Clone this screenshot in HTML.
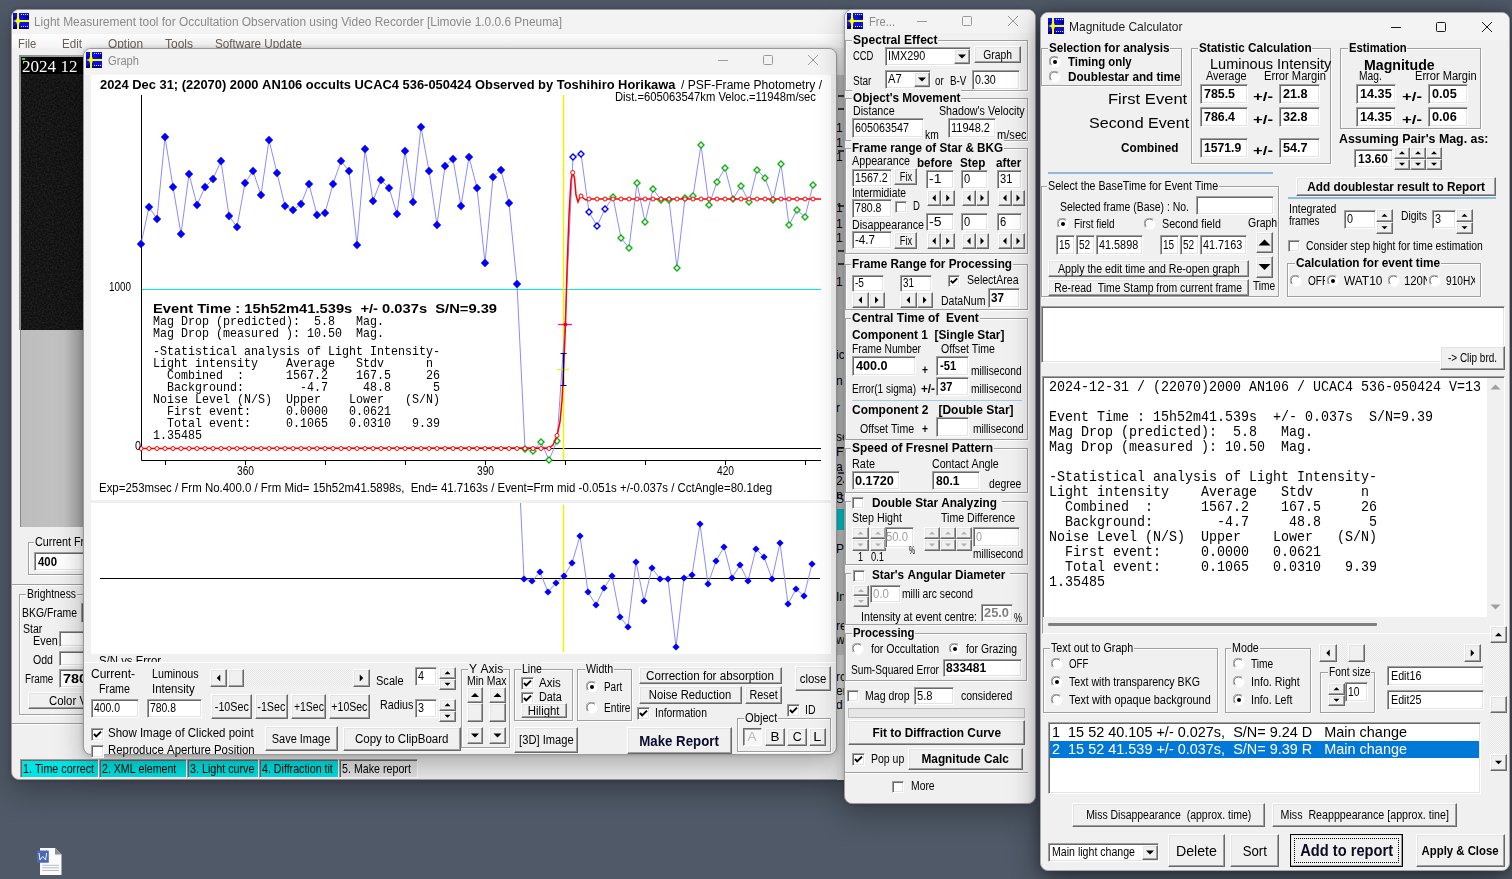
<!DOCTYPE html><html><head><meta charset="utf-8"><style>
*{margin:0;padding:0;box-sizing:border-box}
html,body{width:1512px;height:879px;overflow:hidden}
body{position:relative;font-family:"Liberation Sans",sans-serif;font-size:12px;
 background:#4f5967;}
.a{position:absolute}
.t{position:absolute;white-space:nowrap}
.win{position:absolute;background:#f0f0f0;border:1px solid #9a9a9a;border-radius:8px;overflow:hidden;box-shadow:0 12px 28px rgba(0,0,0,0.28), 0 0 4px rgba(0,0,0,0.2)}
.ed{position:absolute;white-space:nowrap;overflow:hidden;border-top:1px solid #a0a0a0;border-left:1px solid #a0a0a0;border-bottom:1px solid #fff;border-right:1px solid #fff;box-shadow:inset 1px 1px 0 #696969, inset -1px -1px 0 #e3e3e3}
.bt{position:absolute;white-space:nowrap;overflow:hidden;display:flex;justify-content:center;align-items:center;background:#f0f0f0;border-top:1px solid #fff;border-left:1px solid #fff;border-bottom:1px solid #696969;border-right:1px solid #696969;box-shadow:inset -1px -1px 0 #a0a0a0, inset 1px 1px 0 #e3e3e3}
.gb{position:absolute;border:1px solid #a0a0a0;box-shadow:inset 1px 1px 0 #fff, 1px 1px 0 #fff}
.gl{background:#f0f0f0;padding:0 1px}
.ck{position:absolute;background:#fff;border-top:1px solid #a0a0a0;border-left:1px solid #a0a0a0;border-bottom:1px solid #fff;border-right:1px solid #fff;box-shadow:inset 1px 1px 0 #696969, inset -1px -1px 0 #e3e3e3}
</style></head><body><svg class="a" style="left:30px;top:840px" width="40" height="39" viewBox="0 0 40 39"><path d="M10 8 H25 L31.5 14.5 V35 H10Z" fill="#fafafa"/><path d="M25 8 L31.5 14.5 H25Z" fill="#8a8c90"/><rect x="7" y="10.6" width="11.8" height="12.2" rx="0.5" fill="#4a68b4"/><path d="M9 13 L10 20 L12.8 16.5 L15.6 20 L16.6 13" stroke="#f4f6ff" stroke-width="1" fill="none"/><path d="M12.3 25.3 H29 M12.3 27.8 H29 M12.3 30.5 H29" stroke="#b8bcc8" stroke-width="1"/></svg><div class="win" style="left:11px;top:9px;width:845px;height:771px"></div><div class="a" style="left:12px;top:10px;width:843px;height:24px;background:#f3f3f3;border-radius:7px 7px 0 0"></div><div class="a" style="left:12px;top:34px;width:843px;height:14px;background:linear-gradient(#fefefe,#f5f5f5)"></div><svg class="a" style="left:13px;top:13px" width="16" height="16" viewBox="0 0 16 16"><rect x="0" y="0" width="16" height="16" fill="#0a10e8"/><path d="M0 14 L4 12 L8 15 L12 13 L16 16 H0Z M9 2 L13 4 L16 2 V6 L12 5Z M1 3 L3 5 L0 7Z" fill="#00007a"/><rect x="3" y="7" width="13" height="2" fill="#ffff00"/><rect x="4" y="0" width="2" height="16" fill="#ffff00"/><path d="M5 2 L6.8 7 L10 8 L6.8 9 L5 14 L3.2 9 L0 8 L3.2 7Z" fill="#ffff00"/><rect x="8" y="1" width="1" height="1" fill="#e0e8ff"/><rect x="10" y="1" width="1" height="1" fill="#e0e8ff"/><rect x="12" y="1" width="1" height="1" fill="#e0e8ff"/><rect x="14" y="1" width="1" height="1" fill="#e0e8ff"/><rect x="8" y="13" width="1" height="1" fill="#e0e8ff"/><rect x="10" y="13" width="1" height="1" fill="#e0e8ff"/><rect x="12" y="13" width="1" height="1" fill="#e0e8ff"/><rect x="14" y="13" width="1" height="1" fill="#e0e8ff"/></svg><div class="t" style="left:34px;top:13.5px;line-height:16px;"><span style="display:inline-block;flex-shrink:0;font-size:12.5px;color:#8a8a8a;font-family:'Liberation Sans', sans-serif;transform:scaleX(0.9527);transform-origin:0 50%">Light&nbsp;Measurement&nbsp;tool&nbsp;for&nbsp;Occultation&nbsp;Observation&nbsp;using&nbsp;Video&nbsp;Recorder&nbsp;[Limovie&nbsp;1.0.0.6&nbsp;Pneuma]</span></div><div class="t" style="left:18px;top:35.5px;line-height:16px;"><span style="display:inline-block;flex-shrink:0;font-size:12.5px;color:#6a5d55;font-family:'Liberation Sans', sans-serif;transform:scaleX(0.9036);transform-origin:0 50%">File</span></div><div class="t" style="left:62.4px;top:35.5px;line-height:16px;"><span style="display:inline-block;flex-shrink:0;font-size:12.5px;color:#6a5d55;font-family:'Liberation Sans', sans-serif;transform:scaleX(0.9285);transform-origin:0 50%">Edit</span></div><div class="t" style="left:108.4px;top:35.5px;line-height:16px;"><span style="display:inline-block;flex-shrink:0;font-size:12.5px;color:#6a5d55;font-family:'Liberation Sans', sans-serif;transform:scaleX(0.9503);transform-origin:0 50%">Option</span></div><div class="t" style="left:164.8px;top:35.5px;line-height:16px;"><span style="display:inline-block;flex-shrink:0;font-size:12.5px;color:#6a5d55;font-family:'Liberation Sans', sans-serif;transform:scaleX(0.9595);transform-origin:0 50%">Tools</span></div><div class="t" style="left:214.8px;top:35.5px;line-height:16px;"><span style="display:inline-block;flex-shrink:0;font-size:12.5px;color:#6a5d55;font-family:'Liberation Sans', sans-serif;transform:scaleX(0.9344);transform-origin:0 50%">Software&nbsp;Update</span></div><div class="a" style="left:19px;top:55px;width:64px;height:275px;background:linear-gradient(90deg,#8a8a8a,#b0b0b0)"></div><div class="a" style="left:21px;top:57px;width:62px;height:273px;background:#0e0e0e"></div><svg class="a" style="left:21px;top:74px" width="62" height="256"><filter id="nz"><feTurbulence type="fractalNoise" baseFrequency="0.6" numOctaves="2" seed="3"/><feColorMatrix values="0 0 0 0 0.12  0 0 0 0 0.12  0 0 0 0 0.12  0 0 0 0.5 -0.15"/></filter><rect width="62" height="256" filter="url(#nz)"/></svg><div class="a" style="left:21px;top:57px;width:62px;height:17px;background:#000"></div><div class="a" style="left:22px;top:58px;width:3px;height:2px;background:#20e020"></div><div class="t" style="left:21.5px;top:58.5px;line-height:16px;"><span style="display:inline-block;flex-shrink:0;font-size:16px;color:#fff;font-family:'Liberation Serif', serif;transform:scaleX(1.0673);transform-origin:0 50%">2024&nbsp;12</span></div><div class="a" style="left:20px;top:330px;width:63px;height:197px;background:linear-gradient(90deg,#bdbdbd 0%,#c2c2c2 70%,#a4a4a4 100%);border-left:1px solid #888"></div><div class="gb" style="left:28px;top:542px;width:66px;height:33px"></div><div class="t gl" style="left:34px;top:534px;line-height:16px;width:51.2px;overflow:hidden"><span style="display:inline-block;flex-shrink:0;font-size:12px;color:#000;font-family:'Liberation Sans', sans-serif;transform:scaleX(0.9000);transform-origin:0 50%">Current&nbsp;Fr</span></div><div class="ed" style="left:34px;top:552px;width:61px;height:19px;background:#fff;line-height:17px;padding-left:3px"><span style="display:inline-block;flex-shrink:0;font-size:13px;font-weight:bold;color:#000;font-family:'Liberation Sans', sans-serif;transform:scaleX(0.8760);transform-origin:0 50%">400</span></div><div class="a" style="left:12px;top:584px;width:71px;height:1px;background:#a0a0a0"></div><div class="a" style="left:12px;top:585px;width:71px;height:1px;background:#fff"></div><div class="gb" style="left:19px;top:594px;width:75px;height:121px"></div><div class="t gl" style="left:26px;top:586px;line-height:16px;width:51.0px;overflow:hidden"><span style="display:inline-block;flex-shrink:0;font-size:12px;color:#000;font-family:'Liberation Sans', sans-serif;transform:scaleX(0.8643);transform-origin:0 50%">Brightness</span></div><div class="t" style="left:21.7px;top:605.0px;line-height:16px;"><span style="display:inline-block;flex-shrink:0;font-size:12px;color:#000;font-family:'Liberation Sans', sans-serif;transform:scaleX(0.8682);transform-origin:0 50%">BKG/Frame</span></div><div class="ed" style="left:81px;top:603px;width:14px;height:20px;background:#fff;line-height:18px;padding-left:3px"></div><div class="t" style="left:23px;top:621.0px;line-height:16px;"><span style="display:inline-block;flex-shrink:0;font-size:12px;color:#000;font-family:'Liberation Sans', sans-serif;transform:scaleX(0.8770);transform-origin:0 50%">Star</span></div><div class="t" style="left:33px;top:633.0px;line-height:16px;"><span style="display:inline-block;flex-shrink:0;font-size:12px;color:#000;font-family:'Liberation Sans', sans-serif;transform:scaleX(0.9031);transform-origin:0 50%">Even</span></div><div class="ed" style="left:59px;top:631px;width:36px;height:16px;background:#fff;line-height:14px;padding-left:3px"></div><div class="t" style="left:33px;top:652.0px;line-height:16px;"><span style="display:inline-block;flex-shrink:0;font-size:12px;color:#000;font-family:'Liberation Sans', sans-serif;transform:scaleX(0.8818);transform-origin:0 50%">Odd</span></div><div class="ed" style="left:59px;top:651px;width:36px;height:15px;background:#fff;line-height:13px;padding-left:3px"></div><div class="t" style="left:25.4px;top:670.5px;line-height:16px;"><span style="display:inline-block;flex-shrink:0;font-size:12px;color:#000;font-family:'Liberation Sans', sans-serif;transform:scaleX(0.8163);transform-origin:0 50%">Frame</span></div><div class="ed" style="left:59px;top:669px;width:36px;height:19px;background:#fff;line-height:17px;padding-left:3px"><span style="display:inline-block;flex-shrink:0;font-size:13px;font-weight:bold;color:#000;font-family:'Liberation Sans', sans-serif;transform:scaleX(1.1065);transform-origin:0 50%">780</span></div><div class="bt" style="left:28px;top:692px;width:82px;height:17px;line-height:16px;padding-top:0px;"></div><div class="t" style="left:48.5px;top:692.5px;line-height:16px;"><span style="display:inline-block;flex-shrink:0;font-size:12px;color:#000;font-family:'Liberation Sans', sans-serif;transform:scaleX(0.9497);transform-origin:0 50%">Color&nbsp;V</span></div><div class="a" style="left:12px;top:723px;width:831px;height:1px;background:#a0a0a0"></div><div class="a" style="left:12px;top:724px;width:831px;height:1px;background:#fff"></div><div class="a" style="left:20px;top:759px;width:79px;height:19px;background:#00e4e4;border:1px solid #a0a0a0;border-right-color:#fff;border-bottom-color:#fff;box-shadow:inset 1px 1px 0 #696969"></div><div class="t" style="left:23px;top:760.5px;line-height:16px;"><span style="display:inline-block;flex-shrink:0;font-size:13px;color:#000;font-family:'Liberation Sans', sans-serif;transform:scaleX(0.8236);transform-origin:0 50%">1.&nbsp;Time&nbsp;correct</span></div><div class="a" style="left:99px;top:759px;width:88px;height:19px;background:#00e4e4;border:1px solid #a0a0a0;border-right-color:#fff;border-bottom-color:#fff;box-shadow:inset 1px 1px 0 #696969"></div><div class="t" style="left:102px;top:760.5px;line-height:16px;"><span style="display:inline-block;flex-shrink:0;font-size:13px;color:#000;font-family:'Liberation Sans', sans-serif;transform:scaleX(0.8160);transform-origin:0 50%">2.&nbsp;XML&nbsp;element</span></div><div class="a" style="left:187px;top:759px;width:72px;height:19px;background:#00e4e4;border:1px solid #a0a0a0;border-right-color:#fff;border-bottom-color:#fff;box-shadow:inset 1px 1px 0 #696969"></div><div class="t" style="left:190px;top:760.5px;line-height:16px;"><span style="display:inline-block;flex-shrink:0;font-size:13px;color:#000;font-family:'Liberation Sans', sans-serif;transform:scaleX(0.8252);transform-origin:0 50%">3.&nbsp;Light&nbsp;curve</span></div><div class="a" style="left:259px;top:759px;width:80px;height:19px;background:#00e4e4;border:1px solid #a0a0a0;border-right-color:#fff;border-bottom-color:#fff;box-shadow:inset 1px 1px 0 #696969"></div><div class="t" style="left:262px;top:760.5px;line-height:16px;"><span style="display:inline-block;flex-shrink:0;font-size:13px;color:#000;font-family:'Liberation Sans', sans-serif;transform:scaleX(0.8189);transform-origin:0 50%">4.&nbsp;Diffraction&nbsp;tit</span></div><div class="a" style="left:339px;top:759px;width:79px;height:19px;background:#e6e6e6;border:1px solid #a0a0a0;border-right-color:#fff;border-bottom-color:#fff;box-shadow:inset 1px 1px 0 #696969"></div><div class="t" style="left:342px;top:760.5px;line-height:16px;"><span style="display:inline-block;flex-shrink:0;font-size:13px;color:#000;font-family:'Liberation Sans', sans-serif;transform:scaleX(0.8220);transform-origin:0 50%">5.&nbsp;Make&nbsp;report</span></div><div class="a" style="left:837px;top:48px;width:7px;height:732px;background:#ececec"></div><div class="a" style="left:837px;top:75px;width:7px;height:425px;background:#c8c8c8"></div><div class="a" style="left:837px;top:503px;width:7px;height:152px;background:#d0d0d0"></div><div class="a" style="left:838px;top:95px;width:6px;height:1.5px;background:#404040"></div><div class="a" style="left:838px;top:108px;width:6px;height:1.5px;background:#404040"></div><div class="a" style="left:838px;top:150px;width:6px;height:1.5px;background:#404040"></div><div class="a" style="left:838px;top:205px;width:6px;height:1.5px;background:#404040"></div><div class="a" style="left:838px;top:250px;width:6px;height:1.5px;background:#404040"></div><div class="a" style="left:838px;top:263px;width:6px;height:1.5px;background:#404040"></div><div class="a" style="left:838px;top:447px;width:6px;height:1.5px;background:#404040"></div><div class="a" style="left:838px;top:472px;width:6px;height:1.5px;background:#404040"></div><div class="a" style="left:837px;top:120px;width:7px;height:16px;overflow:hidden;line-height:16px"><span style="font-size:12px;margin-left:-1px">1</span></div><div class="a" style="left:837px;top:135px;width:7px;height:16px;overflow:hidden;line-height:16px"><span style="font-size:12px;margin-left:-1px">1</span></div><div class="a" style="left:837px;top:149px;width:7px;height:16px;overflow:hidden;line-height:16px"><span style="font-size:12px;margin-left:-1px">1</span></div><div class="a" style="left:837px;top:200px;width:7px;height:16px;overflow:hidden;line-height:16px"><span style="font-size:12px;margin-left:-1px">1</span></div><div class="a" style="left:837px;top:216px;width:7px;height:16px;overflow:hidden;line-height:16px"><span style="font-size:12px;margin-left:-1px">1</span></div><div class="a" style="left:837px;top:230px;width:7px;height:16px;overflow:hidden;line-height:16px"><span style="font-size:12px;margin-left:-1px">1</span></div><div class="a" style="left:837px;top:274px;width:7px;height:16px;overflow:hidden;line-height:16px"><span style="font-size:12px;margin-left:-1px">1</span></div><div class="a" style="left:837px;top:347px;width:7px;height:16px;overflow:hidden;line-height:16px"><span style="font-size:12px;margin-left:-1px">ic</span></div><div class="a" style="left:837px;top:373px;width:7px;height:16px;overflow:hidden;line-height:16px"><span style="font-size:12px;margin-left:-1px">n</span></div><div class="a" style="left:837px;top:400px;width:7px;height:16px;overflow:hidden;line-height:16px"><span style="font-size:12px;margin-left:-1px">r</span></div><div class="a" style="left:837px;top:429px;width:7px;height:16px;overflow:hidden;line-height:16px"><span style="font-size:12px;margin-left:-1px">se</span></div><div class="a" style="left:837px;top:444px;width:7px;height:16px;overflow:hidden;line-height:16px"><span style="font-size:12px;margin-left:-1px">Fi</span></div><div class="a" style="left:837px;top:487px;width:7px;height:16px;overflow:hidden;line-height:16px"><span style="font-size:12px;margin-left:-1px">n</span></div><div class="a" style="left:837px;top:459px;width:7px;height:16px;overflow:hidden;line-height:16px"><span style="font-size:12px;margin-left:-1px">a</span></div><div class="a" style="left:837px;top:473px;width:7px;height:16px;overflow:hidden;line-height:16px"><span style="font-size:12px;margin-left:-1px">24</span></div><div class="a" style="left:837px;top:491px;width:7px;height:16px;overflow:hidden;line-height:16px"><span style="font-size:12px;margin-left:-1px">S</span></div><div class="a" style="left:837px;top:541px;width:7px;height:16px;overflow:hidden;line-height:16px"><span style="font-size:12px;margin-left:-1px">P</span></div><div class="a" style="left:837px;top:589px;width:7px;height:16px;overflow:hidden;line-height:16px"><span style="font-size:12px;margin-left:-1px">In</span></div><div class="a" style="left:837px;top:618px;width:7px;height:16px;overflow:hidden;line-height:16px"><span style="font-size:12px;margin-left:-1px">re</span></div><div class="a" style="left:837px;top:632px;width:7px;height:16px;overflow:hidden;line-height:16px"><span style="font-size:12px;margin-left:-1px">w</span></div><div class="a" style="left:837px;top:669px;width:7px;height:16px;overflow:hidden;line-height:16px"><span style="font-size:12px;margin-left:-1px">rc</span></div><div class="a" style="left:837px;top:683px;width:7px;height:16px;overflow:hidden;line-height:16px"><span style="font-size:12px;margin-left:-1px">er</span></div><div class="a" style="left:837px;top:697px;width:7px;height:16px;overflow:hidden;line-height:16px"><span style="font-size:12px;margin-left:-1px">d</span></div><div class="a" style="left:837px;top:509px;width:7px;height:21px;background:#00d0d8"></div><div class="win" style="left:83px;top:48px;width:754px;height:707px"></div><div class="a" style="left:84px;top:49px;width:752px;height:26px;background:#f3f3f3;border-radius:7px 7px 0 0"></div><svg class="a" style="left:86px;top:52px" width="16" height="16" viewBox="0 0 16 16"><rect x="0" y="0" width="16" height="16" fill="#0a10e8"/><path d="M0 14 L4 12 L8 15 L12 13 L16 16 H0Z M9 2 L13 4 L16 2 V6 L12 5Z M1 3 L3 5 L0 7Z" fill="#00007a"/><rect x="3" y="7" width="13" height="2" fill="#ffff00"/><rect x="4" y="0" width="2" height="16" fill="#ffff00"/><path d="M5 2 L6.8 7 L10 8 L6.8 9 L5 14 L3.2 9 L0 8 L3.2 7Z" fill="#ffff00"/><rect x="8" y="1" width="1" height="1" fill="#e0e8ff"/><rect x="10" y="1" width="1" height="1" fill="#e0e8ff"/><rect x="12" y="1" width="1" height="1" fill="#e0e8ff"/><rect x="14" y="1" width="1" height="1" fill="#e0e8ff"/><rect x="8" y="13" width="1" height="1" fill="#e0e8ff"/><rect x="10" y="13" width="1" height="1" fill="#e0e8ff"/><rect x="12" y="13" width="1" height="1" fill="#e0e8ff"/><rect x="14" y="13" width="1" height="1" fill="#e0e8ff"/></svg><div class="t" style="left:108px;top:52.5px;line-height:16px;"><span style="display:inline-block;flex-shrink:0;font-size:12.5px;color:#8a8a8a;font-family:'Liberation Sans', sans-serif;transform:scaleX(0.8923);transform-origin:0 50%">Graph</span></div><svg class="a" style="left:0;top:0" width="1512" height="879" viewBox="0 0 1512 879"><path d="M718 60.5 h10" stroke="#9a9a9a" stroke-width="1"/><rect x="763.5" y="55.5" width="9" height="9" rx="1" stroke="#9a9a9a" fill="none" stroke-width="1"/><path d="M808 55 l10 10 M818 55 l-10 10" stroke="#9a9a9a" stroke-width="1"/></svg><div class="a" style="left:91px;top:75px;width:740px;height:425px;background:#fff"></div><div class="a" style="left:91px;top:503px;width:740px;height:151px;background:#fff"></div><svg class="a" style="left:0;top:0" width="1512" height="879" viewBox="0 0 1512 879"><path d="M141.5 95 V460.5 H821" stroke="#000" stroke-width="1" fill="none"/><path d="M165.5 460 V465" stroke="#000" stroke-width="1"/><path d="M245.5 460 V465" stroke="#000" stroke-width="1"/><path d="M325.5 460 V465" stroke="#000" stroke-width="1"/><path d="M405.5 460 V465" stroke="#000" stroke-width="1"/><path d="M485.5 460 V465" stroke="#000" stroke-width="1"/><path d="M565.5 460 V465" stroke="#000" stroke-width="1"/><path d="M645.5 460 V465" stroke="#000" stroke-width="1"/><path d="M725.5 460 V465" stroke="#000" stroke-width="1"/><path d="M805.5 460 V465" stroke="#000" stroke-width="1"/><path d="M142 289.5 H821" stroke="#00e8f0" stroke-width="1.2"/><path d="M142 448.5 H821" stroke="#000" stroke-width="1"/><path d="M563.5 95 V460" stroke="#f0f000" stroke-width="1.5"/><path d="M563.5 505 V652" stroke="#f0f000" stroke-width="1.5"/><path d="M141 244 L149 207 L157 219 L165 137 L173 187 L181 234 L189 174 L197 205 L205 187 L213 179 L221 161 L229 216 L237 227 L245 183 L253 171 L261 195 L269 140 L277 173 L285 206 L293 210 L301 204 L309 184 L317 215 L325 213 L333 184 L341 161 L349 171 L357 245 L365 149 L373 201 L381 180 L389 188 L397 214 L405 151 L413 202 L421 127 L429 171 L437 225 L445 166 L453 159 L461 206 L469 157 L477 188 L485 263 L493 177 L501 170 L509 203 L517 284 L525 449 L533 451 L541 442 L549 460 L557 441 L565 324 L573 157 L581 154 L589 212 L597 226 L605 209 L613 197 L621 238 L629 248 L637 183 L645 222 L653 189 L661 200 L669 200 L677 268 L685 198 L693 196 L701 145 L709 205 L717 182 L725 168 L733 199 L741 186 L749 202 L757 170 L765 178 L773 200 L781 164 L789 225 L797 210 L805 217 L813 185" stroke="#8c8cff" stroke-width="1" fill="none"/><path d="M141 239.8L145.2 244L141 248.2L136.8 244Z" fill="#0000ff"/><path d="M149 202.8L153.2 207L149 211.2L144.8 207Z" fill="#0000ff"/><path d="M157 214.8L161.2 219L157 223.2L152.8 219Z" fill="#0000ff"/><path d="M165 132.8L169.2 137L165 141.2L160.8 137Z" fill="#0000ff"/><path d="M173 182.8L177.2 187L173 191.2L168.8 187Z" fill="#0000ff"/><path d="M181 229.8L185.2 234L181 238.2L176.8 234Z" fill="#0000ff"/><path d="M189 169.8L193.2 174L189 178.2L184.8 174Z" fill="#0000ff"/><path d="M197 200.8L201.2 205L197 209.2L192.8 205Z" fill="#0000ff"/><path d="M205 182.8L209.2 187L205 191.2L200.8 187Z" fill="#0000ff"/><path d="M213 174.8L217.2 179L213 183.2L208.8 179Z" fill="#0000ff"/><path d="M221 156.8L225.2 161L221 165.2L216.8 161Z" fill="#0000ff"/><path d="M229 211.8L233.2 216L229 220.2L224.8 216Z" fill="#0000ff"/><path d="M237 222.8L241.2 227L237 231.2L232.8 227Z" fill="#0000ff"/><path d="M245 178.8L249.2 183L245 187.2L240.8 183Z" fill="#0000ff"/><path d="M253 166.8L257.2 171L253 175.2L248.8 171Z" fill="#0000ff"/><path d="M261 190.8L265.2 195L261 199.2L256.8 195Z" fill="#0000ff"/><path d="M269 135.8L273.2 140L269 144.2L264.8 140Z" fill="#0000ff"/><path d="M277 168.8L281.2 173L277 177.2L272.8 173Z" fill="#0000ff"/><path d="M285 201.8L289.2 206L285 210.2L280.8 206Z" fill="#0000ff"/><path d="M293 205.8L297.2 210L293 214.2L288.8 210Z" fill="#0000ff"/><path d="M301 199.8L305.2 204L301 208.2L296.8 204Z" fill="#0000ff"/><path d="M309 179.8L313.2 184L309 188.2L304.8 184Z" fill="#0000ff"/><path d="M317 210.8L321.2 215L317 219.2L312.8 215Z" fill="#0000ff"/><path d="M325 208.8L329.2 213L325 217.2L320.8 213Z" fill="#0000ff"/><path d="M333 179.8L337.2 184L333 188.2L328.8 184Z" fill="#0000ff"/><path d="M341 156.8L345.2 161L341 165.2L336.8 161Z" fill="#0000ff"/><path d="M349 166.8L353.2 171L349 175.2L344.8 171Z" fill="#0000ff"/><path d="M357 240.8L361.2 245L357 249.2L352.8 245Z" fill="#0000ff"/><path d="M365 144.8L369.2 149L365 153.2L360.8 149Z" fill="#0000ff"/><path d="M373 196.8L377.2 201L373 205.2L368.8 201Z" fill="#0000ff"/><path d="M381 175.8L385.2 180L381 184.2L376.8 180Z" fill="#0000ff"/><path d="M389 183.8L393.2 188L389 192.2L384.8 188Z" fill="#0000ff"/><path d="M397 209.8L401.2 214L397 218.2L392.8 214Z" fill="#0000ff"/><path d="M405 146.8L409.2 151L405 155.2L400.8 151Z" fill="#0000ff"/><path d="M413 197.8L417.2 202L413 206.2L408.8 202Z" fill="#0000ff"/><path d="M421 122.8L425.2 127L421 131.2L416.8 127Z" fill="#0000ff"/><path d="M429 166.8L433.2 171L429 175.2L424.8 171Z" fill="#0000ff"/><path d="M437 220.8L441.2 225L437 229.2L432.8 225Z" fill="#0000ff"/><path d="M445 161.8L449.2 166L445 170.2L440.8 166Z" fill="#0000ff"/><path d="M453 154.8L457.2 159L453 163.2L448.8 159Z" fill="#0000ff"/><path d="M461 201.8L465.2 206L461 210.2L456.8 206Z" fill="#0000ff"/><path d="M469 152.8L473.2 157L469 161.2L464.8 157Z" fill="#0000ff"/><path d="M477 183.8L481.2 188L477 192.2L472.8 188Z" fill="#0000ff"/><path d="M485 258.8L489.2 263L485 267.2L480.8 263Z" fill="#0000ff"/><path d="M493 172.8L497.2 177L493 181.2L488.8 177Z" fill="#0000ff"/><path d="M501 165.8L505.2 170L501 174.2L496.8 170Z" fill="#0000ff"/><path d="M509 198.8L513.2 203L509 207.2L504.8 203Z" fill="#0000ff"/><path d="M517 279.8L521.2 284L517 288.2L512.8 284Z" fill="#0000ff"/><path d="M525 446.0L528.0 449L525 452.0L522.0 449Z" fill="#fff" stroke="#10b010" stroke-width="1.4"/><path d="M533 448.0L536.0 451L533 454.0L530.0 451Z" fill="#fff" stroke="#10b010" stroke-width="1.4"/><path d="M541 439.0L544.0 442L541 445.0L538.0 442Z" fill="#fff" stroke="#10b010" stroke-width="1.4"/><path d="M549 457.0L552.0 460L549 463.0L546.0 460Z" fill="#fff" stroke="#10b010" stroke-width="1.4"/><path d="M557 438.0L560.0 441L557 444.0L554.0 441Z" fill="#fff" stroke="#10b010" stroke-width="1.4"/><path d="M613 194.0L616.0 197L613 200.0L610.0 197Z" fill="#fff" stroke="#10b010" stroke-width="1.4"/><path d="M621 235.0L624.0 238L621 241.0L618.0 238Z" fill="#fff" stroke="#10b010" stroke-width="1.4"/><path d="M629 245.0L632.0 248L629 251.0L626.0 248Z" fill="#fff" stroke="#10b010" stroke-width="1.4"/><path d="M637 180.0L640.0 183L637 186.0L634.0 183Z" fill="#fff" stroke="#10b010" stroke-width="1.4"/><path d="M645 219.0L648.0 222L645 225.0L642.0 222Z" fill="#fff" stroke="#10b010" stroke-width="1.4"/><path d="M653 186.0L656.0 189L653 192.0L650.0 189Z" fill="#fff" stroke="#10b010" stroke-width="1.4"/><path d="M661 197.0L664.0 200L661 203.0L658.0 200Z" fill="#fff" stroke="#10b010" stroke-width="1.4"/><path d="M669 197.0L672.0 200L669 203.0L666.0 200Z" fill="#fff" stroke="#10b010" stroke-width="1.4"/><path d="M677 265.0L680.0 268L677 271.0L674.0 268Z" fill="#fff" stroke="#10b010" stroke-width="1.4"/><path d="M685 195.0L688.0 198L685 201.0L682.0 198Z" fill="#fff" stroke="#10b010" stroke-width="1.4"/><path d="M693 193.0L696.0 196L693 199.0L690.0 196Z" fill="#fff" stroke="#10b010" stroke-width="1.4"/><path d="M701 142.0L704.0 145L701 148.0L698.0 145Z" fill="#fff" stroke="#10b010" stroke-width="1.4"/><path d="M709 202.0L712.0 205L709 208.0L706.0 205Z" fill="#fff" stroke="#10b010" stroke-width="1.4"/><path d="M717 179.0L720.0 182L717 185.0L714.0 182Z" fill="#fff" stroke="#10b010" stroke-width="1.4"/><path d="M725 165.0L728.0 168L725 171.0L722.0 168Z" fill="#fff" stroke="#10b010" stroke-width="1.4"/><path d="M733 196.0L736.0 199L733 202.0L730.0 199Z" fill="#fff" stroke="#10b010" stroke-width="1.4"/><path d="M741 183.0L744.0 186L741 189.0L738.0 186Z" fill="#fff" stroke="#10b010" stroke-width="1.4"/><path d="M749 199.0L752.0 202L749 205.0L746.0 202Z" fill="#fff" stroke="#10b010" stroke-width="1.4"/><path d="M757 167.0L760.0 170L757 173.0L754.0 170Z" fill="#fff" stroke="#10b010" stroke-width="1.4"/><path d="M765 175.0L768.0 178L765 181.0L762.0 178Z" fill="#fff" stroke="#10b010" stroke-width="1.4"/><path d="M773 197.0L776.0 200L773 203.0L770.0 200Z" fill="#fff" stroke="#10b010" stroke-width="1.4"/><path d="M781 161.0L784.0 164L781 167.0L778.0 164Z" fill="#fff" stroke="#10b010" stroke-width="1.4"/><path d="M789 222.0L792.0 225L789 228.0L786.0 225Z" fill="#fff" stroke="#10b010" stroke-width="1.4"/><path d="M797 207.0L800.0 210L797 213.0L794.0 210Z" fill="#fff" stroke="#10b010" stroke-width="1.4"/><path d="M805 214.0L808.0 217L805 220.0L802.0 217Z" fill="#fff" stroke="#10b010" stroke-width="1.4"/><path d="M813 182.0L816.0 185L813 188.0L810.0 185Z" fill="#fff" stroke="#10b010" stroke-width="1.4"/><path d="M573 154.0L576.0 157L573 160.0L570.0 157Z" fill="#fff" stroke="#0000ff" stroke-width="1.4"/><path d="M581 151.0L584.0 154L581 157.0L578.0 154Z" fill="#fff" stroke="#0000ff" stroke-width="1.4"/><path d="M589 209.0L592.0 212L589 215.0L586.0 212Z" fill="#fff" stroke="#0000ff" stroke-width="1.4"/><path d="M597 223.0L600.0 226L597 229.0L594.0 226Z" fill="#fff" stroke="#0000ff" stroke-width="1.4"/><path d="M605 206.0L608.0 209L605 212.0L602.0 209Z" fill="#fff" stroke="#0000ff" stroke-width="1.4"/><path d="M141 448.5 L549 448 L553 445 L557 436 L560 422 L562 400 L564 360 L565.5 324 L567 270 L569 215 L571 180 L572.7 172 L574.5 178 L576 195 L578 202 L580 197 L581 195 L583 198 L586 200 L590 199 L821 199" stroke="#ff0000" stroke-width="1.5" fill="none"/><circle cx="141" cy="448.5" r="2" fill="#fff" stroke="#ff0000" stroke-width="1"/><circle cx="149" cy="448.5" r="2" fill="#fff" stroke="#ff0000" stroke-width="1"/><circle cx="157" cy="448.5" r="2" fill="#fff" stroke="#ff0000" stroke-width="1"/><circle cx="165" cy="448.5" r="2" fill="#fff" stroke="#ff0000" stroke-width="1"/><circle cx="173" cy="448.5" r="2" fill="#fff" stroke="#ff0000" stroke-width="1"/><circle cx="181" cy="448.5" r="2" fill="#fff" stroke="#ff0000" stroke-width="1"/><circle cx="189" cy="448.5" r="2" fill="#fff" stroke="#ff0000" stroke-width="1"/><circle cx="197" cy="448.5" r="2" fill="#fff" stroke="#ff0000" stroke-width="1"/><circle cx="205" cy="448.5" r="2" fill="#fff" stroke="#ff0000" stroke-width="1"/><circle cx="213" cy="448.5" r="2" fill="#fff" stroke="#ff0000" stroke-width="1"/><circle cx="221" cy="448.5" r="2" fill="#fff" stroke="#ff0000" stroke-width="1"/><circle cx="229" cy="448.5" r="2" fill="#fff" stroke="#ff0000" stroke-width="1"/><circle cx="237" cy="448.5" r="2" fill="#fff" stroke="#ff0000" stroke-width="1"/><circle cx="245" cy="448.5" r="2" fill="#fff" stroke="#ff0000" stroke-width="1"/><circle cx="253" cy="448.5" r="2" fill="#fff" stroke="#ff0000" stroke-width="1"/><circle cx="261" cy="448.5" r="2" fill="#fff" stroke="#ff0000" stroke-width="1"/><circle cx="269" cy="448.5" r="2" fill="#fff" stroke="#ff0000" stroke-width="1"/><circle cx="277" cy="448.5" r="2" fill="#fff" stroke="#ff0000" stroke-width="1"/><circle cx="285" cy="448.5" r="2" fill="#fff" stroke="#ff0000" stroke-width="1"/><circle cx="293" cy="448.5" r="2" fill="#fff" stroke="#ff0000" stroke-width="1"/><circle cx="301" cy="448.5" r="2" fill="#fff" stroke="#ff0000" stroke-width="1"/><circle cx="309" cy="448.5" r="2" fill="#fff" stroke="#ff0000" stroke-width="1"/><circle cx="317" cy="448.5" r="2" fill="#fff" stroke="#ff0000" stroke-width="1"/><circle cx="325" cy="448.5" r="2" fill="#fff" stroke="#ff0000" stroke-width="1"/><circle cx="333" cy="448.5" r="2" fill="#fff" stroke="#ff0000" stroke-width="1"/><circle cx="341" cy="448.5" r="2" fill="#fff" stroke="#ff0000" stroke-width="1"/><circle cx="349" cy="448.5" r="2" fill="#fff" stroke="#ff0000" stroke-width="1"/><circle cx="357" cy="448.5" r="2" fill="#fff" stroke="#ff0000" stroke-width="1"/><circle cx="365" cy="448.5" r="2" fill="#fff" stroke="#ff0000" stroke-width="1"/><circle cx="373" cy="448.5" r="2" fill="#fff" stroke="#ff0000" stroke-width="1"/><circle cx="381" cy="448.5" r="2" fill="#fff" stroke="#ff0000" stroke-width="1"/><circle cx="389" cy="448.5" r="2" fill="#fff" stroke="#ff0000" stroke-width="1"/><circle cx="397" cy="448.5" r="2" fill="#fff" stroke="#ff0000" stroke-width="1"/><circle cx="405" cy="448.5" r="2" fill="#fff" stroke="#ff0000" stroke-width="1"/><circle cx="413" cy="448.5" r="2" fill="#fff" stroke="#ff0000" stroke-width="1"/><circle cx="421" cy="448.5" r="2" fill="#fff" stroke="#ff0000" stroke-width="1"/><circle cx="429" cy="448.5" r="2" fill="#fff" stroke="#ff0000" stroke-width="1"/><circle cx="437" cy="448.5" r="2" fill="#fff" stroke="#ff0000" stroke-width="1"/><circle cx="445" cy="448.5" r="2" fill="#fff" stroke="#ff0000" stroke-width="1"/><circle cx="453" cy="448.5" r="2" fill="#fff" stroke="#ff0000" stroke-width="1"/><circle cx="461" cy="448.5" r="2" fill="#fff" stroke="#ff0000" stroke-width="1"/><circle cx="469" cy="448.5" r="2" fill="#fff" stroke="#ff0000" stroke-width="1"/><circle cx="477" cy="448.5" r="2" fill="#fff" stroke="#ff0000" stroke-width="1"/><circle cx="485" cy="448.5" r="2" fill="#fff" stroke="#ff0000" stroke-width="1"/><circle cx="493" cy="448.5" r="2" fill="#fff" stroke="#ff0000" stroke-width="1"/><circle cx="501" cy="448.5" r="2" fill="#fff" stroke="#ff0000" stroke-width="1"/><circle cx="509" cy="448.5" r="2" fill="#fff" stroke="#ff0000" stroke-width="1"/><circle cx="517" cy="448.5" r="2" fill="#fff" stroke="#ff0000" stroke-width="1"/><circle cx="525" cy="448.5" r="2" fill="#fff" stroke="#ff0000" stroke-width="1"/><circle cx="533" cy="448.5" r="2" fill="#fff" stroke="#ff0000" stroke-width="1"/><circle cx="541" cy="448.5" r="2" fill="#fff" stroke="#ff0000" stroke-width="1"/><circle cx="549" cy="448.5" r="2" fill="#fff" stroke="#ff0000" stroke-width="1"/><circle cx="557" cy="435.5" r="2" fill="#fff" stroke="#ff0000" stroke-width="1"/><circle cx="572.7" cy="172.5" r="2" fill="#fff" stroke="#ff0000" stroke-width="1"/><circle cx="581" cy="196" r="2" fill="#fff" stroke="#ff0000" stroke-width="1"/><circle cx="589" cy="199" r="2" fill="#fff" stroke="#ff0000" stroke-width="1"/><circle cx="597" cy="199" r="2" fill="#fff" stroke="#ff0000" stroke-width="1"/><circle cx="605" cy="199" r="2" fill="#fff" stroke="#ff0000" stroke-width="1"/><circle cx="613" cy="199" r="2" fill="#fff" stroke="#ff0000" stroke-width="1"/><circle cx="621" cy="199" r="2" fill="#fff" stroke="#ff0000" stroke-width="1"/><circle cx="629" cy="199" r="2" fill="#fff" stroke="#ff0000" stroke-width="1"/><circle cx="637" cy="199" r="2" fill="#fff" stroke="#ff0000" stroke-width="1"/><circle cx="645" cy="199" r="2" fill="#fff" stroke="#ff0000" stroke-width="1"/><circle cx="653" cy="199" r="2" fill="#fff" stroke="#ff0000" stroke-width="1"/><circle cx="661" cy="199" r="2" fill="#fff" stroke="#ff0000" stroke-width="1"/><circle cx="669" cy="199" r="2" fill="#fff" stroke="#ff0000" stroke-width="1"/><circle cx="677" cy="199" r="2" fill="#fff" stroke="#ff0000" stroke-width="1"/><circle cx="685" cy="199" r="2" fill="#fff" stroke="#ff0000" stroke-width="1"/><circle cx="693" cy="199" r="2" fill="#fff" stroke="#ff0000" stroke-width="1"/><circle cx="701" cy="199" r="2" fill="#fff" stroke="#ff0000" stroke-width="1"/><circle cx="709" cy="199" r="2" fill="#fff" stroke="#ff0000" stroke-width="1"/><circle cx="717" cy="199" r="2" fill="#fff" stroke="#ff0000" stroke-width="1"/><circle cx="725" cy="199" r="2" fill="#fff" stroke="#ff0000" stroke-width="1"/><circle cx="733" cy="199" r="2" fill="#fff" stroke="#ff0000" stroke-width="1"/><circle cx="741" cy="199" r="2" fill="#fff" stroke="#ff0000" stroke-width="1"/><circle cx="749" cy="199" r="2" fill="#fff" stroke="#ff0000" stroke-width="1"/><circle cx="757" cy="199" r="2" fill="#fff" stroke="#ff0000" stroke-width="1"/><circle cx="765" cy="199" r="2" fill="#fff" stroke="#ff0000" stroke-width="1"/><circle cx="773" cy="199" r="2" fill="#fff" stroke="#ff0000" stroke-width="1"/><circle cx="781" cy="199" r="2" fill="#fff" stroke="#ff0000" stroke-width="1"/><circle cx="789" cy="199" r="2" fill="#fff" stroke="#ff0000" stroke-width="1"/><circle cx="797" cy="199" r="2" fill="#fff" stroke="#ff0000" stroke-width="1"/><circle cx="805" cy="199" r="2" fill="#fff" stroke="#ff0000" stroke-width="1"/><circle cx="813" cy="199" r="2" fill="#fff" stroke="#ff0000" stroke-width="1"/><path d="M558 324.5 H572" stroke="#ff00ff" stroke-width="1.2"/><circle cx="565.3" cy="324.5" r="2" fill="#ff0000"/><path d="M557 369.5 H569" stroke="#f0f000" stroke-width="1.2"/><path d="M563.5 353.5 V385.5 M560.5 353.5 H566.5 M560.5 385.5 H566.5" stroke="#000080" stroke-width="1.2"/><path d="M100 578.5 H820" stroke="#000" stroke-width="1.2"/><path d="M520.5 503 L524 579 L532 581 L540 572 L548 592 L556 583 L564 576 L572 563 L580 536 L588 592 L596 605 L604 588 L612 576 L620 617 L628 627 L636 562 L644 601 L652 568 L660 579 L668 579 L676 647 L684 578 L692 575 L700 524 L708 584 L716 561 L724 547 L732 578 L740 565 L748 581 L756 549 L764 557 L772 579 L780 543 L788 604 L796 589 L804 596 L812 564" stroke="#8c8cff" stroke-width="1" fill="none"/><path d="M524 575.4L527.6 579L524 582.6L520.4 579Z" fill="#0000ff"/><path d="M532 577.4L535.6 581L532 584.6L528.4 581Z" fill="#0000ff"/><path d="M540 568.4L543.6 572L540 575.6L536.4 572Z" fill="#0000ff"/><path d="M548 588.4L551.6 592L548 595.6L544.4 592Z" fill="#0000ff"/><path d="M556 579.4L559.6 583L556 586.6L552.4 583Z" fill="#0000ff"/><path d="M564 572.4L567.6 576L564 579.6L560.4 576Z" fill="#0000ff"/><path d="M572 559.4L575.6 563L572 566.6L568.4 563Z" fill="#0000ff"/><path d="M580 532.4L583.6 536L580 539.6L576.4 536Z" fill="#0000ff"/><path d="M588 588.4L591.6 592L588 595.6L584.4 592Z" fill="#0000ff"/><path d="M596 601.4L599.6 605L596 608.6L592.4 605Z" fill="#0000ff"/><path d="M604 584.4L607.6 588L604 591.6L600.4 588Z" fill="#0000ff"/><path d="M612 572.4L615.6 576L612 579.6L608.4 576Z" fill="#0000ff"/><path d="M620 613.4L623.6 617L620 620.6L616.4 617Z" fill="#0000ff"/><path d="M628 623.4L631.6 627L628 630.6L624.4 627Z" fill="#0000ff"/><path d="M636 558.4L639.6 562L636 565.6L632.4 562Z" fill="#0000ff"/><path d="M644 597.4L647.6 601L644 604.6L640.4 601Z" fill="#0000ff"/><path d="M652 564.4L655.6 568L652 571.6L648.4 568Z" fill="#0000ff"/><path d="M660 575.4L663.6 579L660 582.6L656.4 579Z" fill="#0000ff"/><path d="M668 575.4L671.6 579L668 582.6L664.4 579Z" fill="#0000ff"/><path d="M676 643.4L679.6 647L676 650.6L672.4 647Z" fill="#0000ff"/><path d="M684 574.4L687.6 578L684 581.6L680.4 578Z" fill="#0000ff"/><path d="M692 571.4L695.6 575L692 578.6L688.4 575Z" fill="#0000ff"/><path d="M700 520.4L703.6 524L700 527.6L696.4 524Z" fill="#0000ff"/><path d="M708 580.4L711.6 584L708 587.6L704.4 584Z" fill="#0000ff"/><path d="M716 557.4L719.6 561L716 564.6L712.4 561Z" fill="#0000ff"/><path d="M724 543.4L727.6 547L724 550.6L720.4 547Z" fill="#0000ff"/><path d="M732 574.4L735.6 578L732 581.6L728.4 578Z" fill="#0000ff"/><path d="M740 561.4L743.6 565L740 568.6L736.4 565Z" fill="#0000ff"/><path d="M748 577.4L751.6 581L748 584.6L744.4 581Z" fill="#0000ff"/><path d="M756 545.4L759.6 549L756 552.6L752.4 549Z" fill="#0000ff"/><path d="M764 553.4L767.6 557L764 560.6L760.4 557Z" fill="#0000ff"/><path d="M772 575.4L775.6 579L772 582.6L768.4 579Z" fill="#0000ff"/><path d="M780 539.4L783.6 543L780 546.6L776.4 543Z" fill="#0000ff"/><path d="M788 600.4L791.6 604L788 607.6L784.4 604Z" fill="#0000ff"/><path d="M796 585.4L799.6 589L796 592.6L792.4 589Z" fill="#0000ff"/><path d="M804 592.4L807.6 596L804 599.6L800.4 596Z" fill="#0000ff"/><path d="M812 560.4L815.6 564L812 567.6L808.4 564Z" fill="#0000ff"/></svg><div class="t" style="left:100px;top:77.0px;line-height:16px;"><span style="display:inline-block;flex-shrink:0;font-size:12.5px;font-weight:bold;color:#000;font-family:'Liberation Sans', sans-serif;transform:scaleX(1.0319);transform-origin:0 50%">2024&nbsp;Dec&nbsp;31;&nbsp;(22070)&nbsp;2000&nbsp;AN106&nbsp;occults&nbsp;UCAC4&nbsp;536-050424&nbsp;Observed&nbsp;by&nbsp;Toshihiro&nbsp;Horikawa</span></div><div class="t" style="left:681px;top:77.0px;line-height:16px;"><span style="display:inline-block;flex-shrink:0;font-size:12.5px;color:#000;font-family:'Liberation Sans', sans-serif;transform:scaleX(0.9666);transform-origin:0 50%">/&nbsp;PSF-Frame&nbsp;Photometry&nbsp;/</span></div><div class="t" style="left:615px;top:89.0px;line-height:16px;"><span style="display:inline-block;flex-shrink:0;font-size:12.5px;color:#000;font-family:'Liberation Sans', sans-serif;transform:scaleX(0.8992);transform-origin:0 50%">Dist.=605063547km&nbsp;Veloc.=11948m/sec</span></div><div class="t" style="left:108.6px;top:279.0px;line-height:16px;"><span style="display:inline-block;flex-shrink:0;font-size:12px;color:#000;font-family:'Liberation Sans', sans-serif;transform:scaleX(0.8241);transform-origin:0 50%">1000</span></div><div class="t" style="left:135px;top:437.5px;line-height:16px;"><span style="display:inline-block;flex-shrink:0;font-size:12px;color:#000;font-family:'Liberation Sans', sans-serif;transform:scaleX(0.8990);transform-origin:0 50%">0</span></div><div class="t" style="left:237px;top:463.0px;line-height:16px;"><span style="display:inline-block;flex-shrink:0;font-size:12px;color:#000;font-family:'Liberation Sans', sans-serif;transform:scaleX(0.8491);transform-origin:0 50%">360</span></div><div class="t" style="left:477px;top:463.0px;line-height:16px;"><span style="display:inline-block;flex-shrink:0;font-size:12px;color:#000;font-family:'Liberation Sans', sans-serif;transform:scaleX(0.8491);transform-origin:0 50%">390</span></div><div class="t" style="left:717px;top:463.0px;line-height:16px;"><span style="display:inline-block;flex-shrink:0;font-size:12px;color:#000;font-family:'Liberation Sans', sans-serif;transform:scaleX(0.8491);transform-origin:0 50%">420</span></div><div class="t" style="left:153px;top:300.5px;line-height:16px;"><span style="display:inline-block;flex-shrink:0;font-size:13.5px;font-weight:bold;color:#000;font-family:'Liberation Sans', sans-serif;transform:scaleX(1.0897);transform-origin:0 50%">Event&nbsp;Time&nbsp;:&nbsp;15h52m41.539s&nbsp;&nbsp;+/-&nbsp;0.037s&nbsp;&nbsp;S/N=9.39</span></div><div class="t" style="left:153px;top:314.5px;line-height:12px;"><span style="display:inline-block;flex-shrink:0;font-size:13.3px;color:#000;font-family:'Liberation Mono', monospace;transform:scaleX(0.8772);transform-origin:0 50%">Mag&nbsp;Drop&nbsp;(predicted):&nbsp;&nbsp;5.8&nbsp;&nbsp;&nbsp;Mag.</span></div><div class="t" style="left:153px;top:326.5px;line-height:12px;"><span style="display:inline-block;flex-shrink:0;font-size:13.3px;color:#000;font-family:'Liberation Mono', monospace;transform:scaleX(0.8772);transform-origin:0 50%">Mag&nbsp;Drop&nbsp;(measured&nbsp;):&nbsp;10.50&nbsp;&nbsp;Mag.</span></div><div class="t" style="left:153px;top:344.5px;line-height:12px;"><span style="display:inline-block;flex-shrink:0;font-size:13.3px;color:#000;font-family:'Liberation Mono', monospace;transform:scaleX(0.8772);transform-origin:0 50%">-Statistical&nbsp;analysis&nbsp;of&nbsp;Light&nbsp;Intensity-</span></div><div class="t" style="left:153px;top:356.5px;line-height:12px;"><span style="display:inline-block;flex-shrink:0;font-size:13.3px;color:#000;font-family:'Liberation Mono', monospace;transform:scaleX(0.8772);transform-origin:0 50%">Light&nbsp;intensity&nbsp;&nbsp;&nbsp;&nbsp;Average&nbsp;&nbsp;&nbsp;Stdv&nbsp;&nbsp;&nbsp;&nbsp;&nbsp;&nbsp;n</span></div><div class="t" style="left:153px;top:368.5px;line-height:12px;"><span style="display:inline-block;flex-shrink:0;font-size:13.3px;color:#000;font-family:'Liberation Mono', monospace;transform:scaleX(0.8772);transform-origin:0 50%">&nbsp;&nbsp;Combined&nbsp;&nbsp;:&nbsp;&nbsp;&nbsp;&nbsp;&nbsp;&nbsp;1567.2&nbsp;&nbsp;&nbsp;&nbsp;167.5&nbsp;&nbsp;&nbsp;&nbsp;&nbsp;26</span></div><div class="t" style="left:153px;top:380.5px;line-height:12px;"><span style="display:inline-block;flex-shrink:0;font-size:13.3px;color:#000;font-family:'Liberation Mono', monospace;transform:scaleX(0.8772);transform-origin:0 50%">&nbsp;&nbsp;Background:&nbsp;&nbsp;&nbsp;&nbsp;&nbsp;&nbsp;&nbsp;&nbsp;-4.7&nbsp;&nbsp;&nbsp;&nbsp;&nbsp;48.8&nbsp;&nbsp;&nbsp;&nbsp;&nbsp;&nbsp;5</span></div><div class="t" style="left:153px;top:392.5px;line-height:12px;"><span style="display:inline-block;flex-shrink:0;font-size:13.3px;color:#000;font-family:'Liberation Mono', monospace;transform:scaleX(0.8772);transform-origin:0 50%">Noise&nbsp;Level&nbsp;(N/S)&nbsp;&nbsp;Upper&nbsp;&nbsp;&nbsp;&nbsp;Lower&nbsp;&nbsp;&nbsp;(S/N)</span></div><div class="t" style="left:153px;top:404.5px;line-height:12px;"><span style="display:inline-block;flex-shrink:0;font-size:13.3px;color:#000;font-family:'Liberation Mono', monospace;transform:scaleX(0.8772);transform-origin:0 50%">&nbsp;&nbsp;First&nbsp;event:&nbsp;&nbsp;&nbsp;&nbsp;&nbsp;0.0000&nbsp;&nbsp;&nbsp;0.0621</span></div><div class="t" style="left:153px;top:416.5px;line-height:12px;"><span style="display:inline-block;flex-shrink:0;font-size:13.3px;color:#000;font-family:'Liberation Mono', monospace;transform:scaleX(0.8772);transform-origin:0 50%">&nbsp;&nbsp;Total&nbsp;event:&nbsp;&nbsp;&nbsp;&nbsp;&nbsp;0.1065&nbsp;&nbsp;&nbsp;0.0310&nbsp;&nbsp;&nbsp;9.39</span></div><div class="t" style="left:153px;top:428.5px;line-height:12px;"><span style="display:inline-block;flex-shrink:0;font-size:13.3px;color:#000;font-family:'Liberation Mono', monospace;transform:scaleX(0.8772);transform-origin:0 50%">1.35485</span></div><div class="t" style="left:99px;top:480.0px;line-height:16px;"><span style="display:inline-block;flex-shrink:0;font-size:12.5px;color:#000;font-family:'Liberation Sans', sans-serif;transform:scaleX(0.9155);transform-origin:0 50%">Exp=253msec&nbsp;/&nbsp;Frm&nbsp;No.400.0&nbsp;/&nbsp;Frm&nbsp;Mid=&nbsp;15h52m41.5898s,&nbsp;&nbsp;End=&nbsp;41.7163s&nbsp;/&nbsp;Event=Frm&nbsp;mid&nbsp;-0.051s&nbsp;+/-0.037s&nbsp;/&nbsp;CctAngle=80.1deg</span></div><div class="a" style="left:91px;top:654px;width:740px;height:8px;overflow:hidden"><div class="t" style="left:8px;top:-1px;line-height:16px"><span style="display:inline-block;flex-shrink:0;font-size:12.5px;color:#000;font-family:'Liberation Sans', sans-serif;transform:scaleX(0.9110);transform-origin:0 50%">S/N&nbsp;vs&nbsp;Error</span></div></div><div class="a" style="left:84px;top:662px;width:752px;height:1px;background:#fff"></div><div class="t" style="left:90.5px;top:665.5px;line-height:16px;"><span style="display:inline-block;flex-shrink:0;font-size:12px;color:#000;font-family:'Liberation Sans', sans-serif;transform:scaleX(0.9998);transform-origin:0 50%">Current-</span></div><div class="t" style="left:99px;top:681.0px;line-height:16px;"><span style="display:inline-block;flex-shrink:0;font-size:12px;color:#000;font-family:'Liberation Sans', sans-serif;transform:scaleX(0.8941);transform-origin:0 50%">Frame</span></div><div class="t" style="left:151.5px;top:665.5px;line-height:16px;"><span style="display:inline-block;flex-shrink:0;font-size:12px;color:#000;font-family:'Liberation Sans', sans-serif;transform:scaleX(0.8937);transform-origin:0 50%">Luminous</span></div><div class="t" style="left:151.5px;top:681.0px;line-height:16px;"><span style="display:inline-block;flex-shrink:0;font-size:12px;color:#000;font-family:'Liberation Sans', sans-serif;transform:scaleX(0.9532);transform-origin:0 50%">Intensity</span></div><div class="ed" style="left:91px;top:699px;width:48px;height:19px;background:#fff;line-height:17px;padding-left:2px"><span style="display:inline-block;flex-shrink:0;font-size:12px;color:#000;font-family:'Liberation Sans', sans-serif;transform:scaleX(0.8658);transform-origin:0 50%">400.0</span></div><div class="ed" style="left:147px;top:699px;width:55px;height:19px;background:#fff;line-height:17px;padding-left:2px"><span style="display:inline-block;flex-shrink:0;font-size:12px;color:#000;font-family:'Liberation Sans', sans-serif;transform:scaleX(0.8658);transform-origin:0 50%">780.8</span></div><div class="a" style="left:210px;top:669px;width:160px;height:18px;background:repeating-conic-gradient(#e6e6e6 0 25%,#f7f7f7 0 50%) 0 0/2px 2px"></div><div class="bt" style="left:210px;top:669px;width:17px;height:18px;line-height:16px;padding-top:0px;"></div><div class="bt" style="left:228px;top:669px;width:16px;height:18px;line-height:16px;padding-top:0px;"></div><div class="bt" style="left:353px;top:669px;width:17px;height:18px;line-height:16px;padding-top:0px;"></div><div class="bt" style="left:211px;top:694px;width:41px;height:25px;line-height:16px;padding-top:0px;"><span style="display:inline-block;flex-shrink:0;font-size:12.5px;color:#000;font-family:'Liberation Sans', sans-serif;transform:scaleX(0.8585);transform-origin:50% 50%">-10Sec</span></div><div class="bt" style="left:255px;top:694px;width:33px;height:25px;line-height:16px;padding-top:0px;"><span style="display:inline-block;flex-shrink:0;font-size:12.5px;color:#000;font-family:'Liberation Sans', sans-serif;transform:scaleX(0.8575);transform-origin:50% 50%">-1Sec</span></div><div class="bt" style="left:291px;top:694px;width:35px;height:25px;line-height:16px;padding-top:0px;"><span style="display:inline-block;flex-shrink:0;font-size:12.5px;color:#000;font-family:'Liberation Sans', sans-serif;transform:scaleX(0.8382);transform-origin:50% 50%">+1Sec</span></div><div class="bt" style="left:329px;top:694px;width:41px;height:25px;line-height:16px;padding-top:0px;"><span style="display:inline-block;flex-shrink:0;font-size:12.5px;color:#000;font-family:'Liberation Sans', sans-serif;transform:scaleX(0.8422);transform-origin:50% 50%">+10Sec</span></div><div class="ck" style="left:91px;top:728px;width:13px;height:13px"></div><svg class="a" style="left:91px;top:728px" width="13" height="13" viewBox="0 0 13 13"><path d="M3 6 L5.2 8.4 L10 3.6" stroke="#000" stroke-width="2" fill="none"/></svg><div class="t" style="left:108.4px;top:725.0px;line-height:16px;"><span style="display:inline-block;flex-shrink:0;font-size:12px;color:#000;font-family:'Liberation Sans', sans-serif;transform:scaleX(0.9574);transform-origin:0 50%">Show&nbsp;Image&nbsp;of&nbsp;Clicked&nbsp;point</span></div><div class="ck" style="left:91px;top:745px;width:13px;height:13px"></div><div class="t" style="left:108.4px;top:741.5px;line-height:16px;"><span style="display:inline-block;flex-shrink:0;font-size:12px;color:#000;font-family:'Liberation Sans', sans-serif;transform:scaleX(0.9516);transform-origin:0 50%">Reproduce&nbsp;Aperture&nbsp;Position</span></div><div class="bt" style="left:265px;top:726px;width:73px;height:25px;line-height:16px;padding-top:0px;"><span style="display:inline-block;flex-shrink:0;font-size:12px;color:#000;font-family:'Liberation Sans', sans-serif;transform:scaleX(0.9135);transform-origin:50% 50%">Save&nbsp;Image</span></div><div class="bt" style="left:343px;top:727px;width:118px;height:24px;line-height:16px;padding-top:0px;"><span style="display:inline-block;flex-shrink:0;font-size:12px;color:#000;font-family:'Liberation Sans', sans-serif;transform:scaleX(0.9611);transform-origin:50% 50%">Copy&nbsp;to&nbsp;ClipBoard</span></div><div class="t" style="left:376.3px;top:673.0px;line-height:16px;"><span style="display:inline-block;flex-shrink:0;font-size:12px;color:#000;font-family:'Liberation Sans', sans-serif;transform:scaleX(0.9195);transform-origin:0 50%">Scale</span></div><div class="ed" style="left:415px;top:667px;width:22px;height:19px;background:#fff;line-height:17px;padding-left:2px"><span style="display:inline-block;flex-shrink:0;font-size:12px;color:#000;font-family:'Liberation Sans', sans-serif;transform:scaleX(0.8990);transform-origin:0 50%">4</span></div><div class="bt" style="left:439px;top:667px;width:17px;height:11.5px;line-height:16px;padding-top:0px;"></div><div class="bt" style="left:439px;top:678.5px;width:17px;height:11.5px;line-height:16px;padding-top:0px;"></div><div class="t" style="left:379.7px;top:697.0px;line-height:16px;"><span style="display:inline-block;flex-shrink:0;font-size:12px;color:#000;font-family:'Liberation Sans', sans-serif;transform:scaleX(0.8915);transform-origin:0 50%">Radius</span></div><div class="ed" style="left:415px;top:699px;width:22px;height:19px;background:#fff;line-height:17px;padding-left:2px"><span style="display:inline-block;flex-shrink:0;font-size:12px;color:#000;font-family:'Liberation Sans', sans-serif;transform:scaleX(0.8990);transform-origin:0 50%">3</span></div><div class="bt" style="left:439px;top:699px;width:17px;height:11.5px;line-height:16px;padding-top:0px;"></div><div class="bt" style="left:439px;top:710.5px;width:17px;height:11.5px;line-height:16px;padding-top:0px;"></div><div class="gb" style="left:461px;top:669px;width:49px;height:79px"></div><div class="t gl" style="left:468px;top:661px;line-height:16px;width:35.3px;overflow:hidden"><span style="display:inline-block;flex-shrink:0;font-size:12px;color:#000;font-family:'Liberation Sans', sans-serif;transform:scaleX(1.0052);transform-origin:0 50%">Y&nbsp;Axis</span></div><div class="t" style="left:467.4px;top:673.0px;line-height:16px;"><span style="display:inline-block;flex-shrink:0;font-size:12px;color:#000;font-family:'Liberation Sans', sans-serif;transform:scaleX(0.8734);transform-origin:0 50%">Min&nbsp;Max</span></div><div class="bt" style="left:467px;top:687px;width:16px;height:16px;line-height:16px;padding-top:0px;"></div><div class="bt" style="left:467px;top:703px;width:16px;height:19px;line-height:16px;padding-top:0px;"></div><div class="bt" style="left:467px;top:727px;width:16px;height:17px;line-height:16px;padding-top:0px;"></div><div class="bt" style="left:489px;top:687px;width:17px;height:16px;line-height:16px;padding-top:0px;"></div><div class="bt" style="left:489px;top:703px;width:17px;height:19px;line-height:16px;padding-top:0px;"></div><div class="bt" style="left:489px;top:727px;width:17px;height:17px;line-height:16px;padding-top:0px;"></div><div class="gb" style="left:514px;top:669px;width:59px;height:52px"></div><div class="t gl" style="left:520.5px;top:661px;line-height:16px;width:21.9px;overflow:hidden"><span style="display:inline-block;flex-shrink:0;font-size:12px;color:#000;font-family:'Liberation Sans', sans-serif;transform:scaleX(0.8771);transform-origin:0 50%">Line</span></div><div class="ck" style="left:521px;top:677px;width:13px;height:13px"></div><svg class="a" style="left:521px;top:677px" width="13" height="13" viewBox="0 0 13 13"><path d="M3 6 L5.2 8.4 L10 3.6" stroke="#000" stroke-width="2" fill="none"/></svg><div class="t" style="left:539.4px;top:674.5px;line-height:16px;"><span style="display:inline-block;flex-shrink:0;font-size:12px;color:#000;font-family:'Liberation Sans', sans-serif;transform:scaleX(0.9616);transform-origin:0 50%">Axis</span></div><div class="ck" style="left:521px;top:692px;width:13px;height:13px"></div><svg class="a" style="left:521px;top:692px" width="13" height="13" viewBox="0 0 13 13"><path d="M3 6 L5.2 8.4 L10 3.6" stroke="#000" stroke-width="2" fill="none"/></svg><div class="t" style="left:539.4px;top:689.0px;line-height:16px;"><span style="display:inline-block;flex-shrink:0;font-size:12px;color:#000;font-family:'Liberation Sans', sans-serif;transform:scaleX(0.8995);transform-origin:0 50%">Data</span></div><div class="bt" style="left:521px;top:703px;width:46px;height:15px;line-height:16px;padding-top:0px;"><span style="display:inline-block;flex-shrink:0;font-size:12px;color:#000;font-family:'Liberation Sans', sans-serif;transform:scaleX(0.9506);transform-origin:50% 50%">Hilight</span></div><div class="gb" style="left:577px;top:669px;width:55px;height:52px"></div><div class="t gl" style="left:584.6px;top:661px;line-height:16px;width:29.2px;overflow:hidden"><span style="display:inline-block;flex-shrink:0;font-size:12px;color:#000;font-family:'Liberation Sans', sans-serif;transform:scaleX(0.8867);transform-origin:0 50%">Width</span></div><svg class="a" style="left:585.5px;top:680.5px" width="12" height="12" viewBox="0 0 12 12"><circle cx="6" cy="6" r="5.5" fill="#fff"/><path d="M1.5 9.2 A5 5 0 0 1 9.2 1.5" stroke="#a0a0a0" stroke-width="1" fill="none"/><path d="M2.3 8.6 A4 4 0 0 1 8.6 2.3" stroke="#696969" stroke-width="1" fill="none"/><circle cx="6" cy="6" r="2" fill="#000"/></svg><div class="t" style="left:603.5px;top:678.5px;line-height:16px;"><span style="display:inline-block;flex-shrink:0;font-size:12px;color:#000;font-family:'Liberation Sans', sans-serif;transform:scaleX(0.8270);transform-origin:0 50%">Part</span></div><svg class="a" style="left:585.5px;top:702px" width="12" height="12" viewBox="0 0 12 12"><circle cx="6" cy="6" r="5.5" fill="#fff"/><path d="M1.5 9.2 A5 5 0 0 1 9.2 1.5" stroke="#a0a0a0" stroke-width="1" fill="none"/><path d="M2.3 8.6 A4 4 0 0 1 8.6 2.3" stroke="#696969" stroke-width="1" fill="none"/></svg><div class="t" style="left:603.5px;top:700.0px;line-height:16px;"><span style="display:inline-block;flex-shrink:0;font-size:12px;color:#000;font-family:'Liberation Sans', sans-serif;transform:scaleX(0.8454);transform-origin:0 50%">Entire</span></div><div class="bt" style="left:514px;top:727px;width:64px;height:26px;line-height:16px;padding-top:0px;"><span style="display:inline-block;flex-shrink:0;font-size:12px;color:#000;font-family:'Liberation Sans', sans-serif;transform:scaleX(0.9286);transform-origin:50% 50%">[3D]&nbsp;Image</span></div><div class="bt" style="left:639px;top:667px;width:143px;height:17px;line-height:16px;padding-top:0px;"><span style="display:inline-block;flex-shrink:0;font-size:12px;color:#000;font-family:'Liberation Sans', sans-serif;transform:scaleX(0.9692);transform-origin:50% 50%">Correction&nbsp;for&nbsp;absorption</span></div><div class="bt" style="left:639px;top:686px;width:103px;height:18px;line-height:16px;padding-top:0px;"><span style="display:inline-block;flex-shrink:0;font-size:12px;color:#000;font-family:'Liberation Sans', sans-serif;transform:scaleX(0.9370);transform-origin:50% 50%">Noise&nbsp;Reduction</span></div><div class="bt" style="left:745px;top:686px;width:37px;height:18px;line-height:16px;padding-top:0px;"><span style="display:inline-block;flex-shrink:0;font-size:12px;color:#000;font-family:'Liberation Sans', sans-serif;transform:scaleX(0.9028);transform-origin:50% 50%">Reset</span></div><div class="bt" style="left:795px;top:666px;width:36px;height:25px;line-height:16px;padding-top:0px;"><span style="display:inline-block;flex-shrink:0;font-size:12px;color:#000;font-family:'Liberation Sans', sans-serif;transform:scaleX(0.9531);transform-origin:50% 50%">close</span></div><div class="ck" style="left:637px;top:707px;width:13px;height:13px"></div><svg class="a" style="left:637px;top:707px" width="13" height="13" viewBox="0 0 13 13"><path d="M3 6 L5.2 8.4 L10 3.6" stroke="#000" stroke-width="2" fill="none"/></svg><div class="t" style="left:655.4px;top:705.0px;line-height:16px;"><span style="display:inline-block;flex-shrink:0;font-size:12px;color:#000;font-family:'Liberation Sans', sans-serif;transform:scaleX(0.8646);transform-origin:0 50%">Information</span></div><div class="bt" style="left:627px;top:727px;width:105px;height:27px;line-height:16px;padding-top:0px;"><span style="display:inline-block;flex-shrink:0;font-size:14px;font-weight:bold;color:#0a0a30;font-family:'Liberation Sans', sans-serif;transform:scaleX(0.9474);transform-origin:50% 50%">Make&nbsp;Report</span></div><div class="gb" style="left:737px;top:718px;width:94px;height:34px"></div><div class="t gl" style="left:743.8px;top:710px;line-height:16px;width:34.3px;overflow:hidden"><span style="display:inline-block;flex-shrink:0;font-size:12px;color:#000;font-family:'Liberation Sans', sans-serif;transform:scaleX(0.9313);transform-origin:0 50%">Object</span></div><div class="ck" style="left:787px;top:704px;width:13px;height:13px"></div><svg class="a" style="left:787px;top:704px" width="13" height="13" viewBox="0 0 13 13"><path d="M3 6 L5.2 8.4 L10 3.6" stroke="#000" stroke-width="2" fill="none"/></svg><div class="t" style="left:804.5px;top:702.0px;line-height:16px;"><span style="display:inline-block;flex-shrink:0;font-size:12px;color:#000;font-family:'Liberation Sans', sans-serif;transform:scaleX(0.8750);transform-origin:0 50%">ID</span></div><div class="bt" style="left:743px;top:728px;width:19px;height:18px;line-height:16px;padding-top:0px;background:#f7f7f7;border-color:#696969 #fff #fff #696969;box-shadow:inset 1px 1px 0 #a0a0a0"><span style="display:inline-block;flex-shrink:0;font-size:12px;color:#b8b8b8;font-family:'Liberation Sans', sans-serif;transform:scaleX(1.1244);transform-origin:50% 50%">A</span></div><div class="bt" style="left:765px;top:728px;width:20px;height:18px;line-height:16px;padding-top:0px;"><span style="display:inline-block;flex-shrink:0;font-size:12px;color:#000;font-family:'Liberation Sans', sans-serif;transform:scaleX(1.1244);transform-origin:50% 50%">B</span></div><div class="bt" style="left:787px;top:728px;width:20px;height:18px;line-height:16px;padding-top:0px;"><span style="display:inline-block;flex-shrink:0;font-size:12px;color:#000;font-family:'Liberation Sans', sans-serif;transform:scaleX(1.0385);transform-origin:50% 50%">C</span></div><div class="bt" style="left:809px;top:728px;width:17px;height:18px;line-height:16px;padding-top:0px;"><span style="display:inline-block;flex-shrink:0;font-size:12px;color:#000;font-family:'Liberation Sans', sans-serif;transform:scaleX(1.1987);transform-origin:50% 50%">L</span></div><div class="win" style="left:844px;top:9px;width:192px;height:795px"></div><div class="a" style="left:845px;top:10px;width:190px;height:23px;background:#f3f3f3;border-radius:7px 7px 0 0"></div><svg class="a" style="left:847px;top:13px" width="16" height="16" viewBox="0 0 16 16"><rect x="0" y="0" width="16" height="16" fill="#0a10e8"/><path d="M0 14 L4 12 L8 15 L12 13 L16 16 H0Z M9 2 L13 4 L16 2 V6 L12 5Z M1 3 L3 5 L0 7Z" fill="#00007a"/><rect x="3" y="7" width="13" height="2" fill="#ffff00"/><rect x="4" y="0" width="2" height="16" fill="#ffff00"/><path d="M5 2 L6.8 7 L10 8 L6.8 9 L5 14 L3.2 9 L0 8 L3.2 7Z" fill="#ffff00"/><rect x="8" y="1" width="1" height="1" fill="#e0e8ff"/><rect x="10" y="1" width="1" height="1" fill="#e0e8ff"/><rect x="12" y="1" width="1" height="1" fill="#e0e8ff"/><rect x="14" y="1" width="1" height="1" fill="#e0e8ff"/><rect x="8" y="13" width="1" height="1" fill="#e0e8ff"/><rect x="10" y="13" width="1" height="1" fill="#e0e8ff"/><rect x="12" y="13" width="1" height="1" fill="#e0e8ff"/><rect x="14" y="13" width="1" height="1" fill="#e0e8ff"/></svg><div class="t" style="left:868.7px;top:13.5px;line-height:16px;"><span style="display:inline-block;flex-shrink:0;font-size:12.5px;color:#8a8a8a;font-family:'Liberation Sans', sans-serif;transform:scaleX(0.8914);transform-origin:0 50%">Fre...</span></div><svg class="a" style="left:0;top:0" width="1512" height="879" viewBox="0 0 1512 879"><path d="M917 21.5 h10" stroke="#9a9a9a" stroke-width="1"/><rect x="962.5" y="16.5" width="9" height="9" rx="1" stroke="#9a9a9a" fill="none" stroke-width="1"/><path d="M1008 16 l10 10 M1018 16 l-10 10" stroke="#9a9a9a" stroke-width="1"/></svg><div class="gb" style="left:845px;top:40px;width:183px;height:51px"></div><div class="t gl" style="left:851.6px;top:32px;line-height:16px;width:86.6px;overflow:hidden"><span style="display:inline-block;flex-shrink:0;font-size:12.5px;font-weight:bold;color:#000;font-family:'Liberation Sans', sans-serif;transform:scaleX(0.9665);transform-origin:0 50%">Spectral&nbsp;Effect</span></div><div class="t" style="left:852.6px;top:48.0px;line-height:16px;"><span style="display:inline-block;flex-shrink:0;font-size:12px;color:#000;font-family:'Liberation Sans', sans-serif;transform:scaleX(0.7847);transform-origin:0 50%">CCD</span></div><div class="ed" style="left:885px;top:47px;width:86px;height:19px;background:#fff;line-height:17px;padding-left:2px"><span style="display:inline-block;flex-shrink:0;font-size:12px;color:#000;font-family:'Liberation Sans', sans-serif;transform:scaleX(0.8995);transform-origin:0 50%">IMX290</span></div><div class="bt" style="left:954px;top:49px;width:16px;height:15px;line-height:16px;padding-top:0px;"></div><div class="bt" style="left:974px;top:46px;width:47px;height:17px;line-height:16px;padding-top:0px;"><span style="display:inline-block;flex-shrink:0;font-size:12px;color:#000;font-family:'Liberation Sans', sans-serif;transform:scaleX(0.8605);transform-origin:50% 50%">Graph</span></div><div class="t" style="left:852.6px;top:72.5px;line-height:16px;"><span style="display:inline-block;flex-shrink:0;font-size:12px;color:#000;font-family:'Liberation Sans', sans-serif;transform:scaleX(0.8361);transform-origin:0 50%">Star</span></div><div class="ed" style="left:885px;top:70px;width:46px;height:19px;background:#fff;line-height:17px;padding-left:2px"><span style="display:inline-block;flex-shrink:0;font-size:12px;color:#000;font-family:'Liberation Sans', sans-serif;transform:scaleX(0.9266);transform-origin:0 50%">A7</span></div><div class="bt" style="left:914px;top:72px;width:16px;height:15px;line-height:16px;padding-top:0px;"></div><div class="t" style="left:934.7px;top:72.5px;line-height:16px;"><span style="display:inline-block;flex-shrink:0;font-size:12px;color:#000;font-family:'Liberation Sans', sans-serif;transform:scaleX(0.8060);transform-origin:0 50%">or</span></div><div class="t" style="left:949.5px;top:72.5px;line-height:16px;"><span style="display:inline-block;flex-shrink:0;font-size:12px;color:#000;font-family:'Liberation Sans', sans-serif;transform:scaleX(0.8198);transform-origin:0 50%">B-V</span></div><div class="ed" style="left:972px;top:70px;width:48px;height:20px;background:#fff;line-height:18px;padding-left:2px"><span style="display:inline-block;flex-shrink:0;font-size:12px;color:#000;font-family:'Liberation Sans', sans-serif;transform:scaleX(0.8906);transform-origin:0 50%">0.30</span></div><div class="gb" style="left:845px;top:98px;width:183px;height:43px"></div><div class="t gl" style="left:851.6px;top:90px;line-height:16px;width:109.5px;overflow:hidden"><span style="display:inline-block;flex-shrink:0;font-size:12.5px;font-weight:bold;color:#000;font-family:'Liberation Sans', sans-serif;transform:scaleX(0.9421);transform-origin:0 50%">Object&#x27;s&nbsp;Movement</span></div><div class="t" style="left:852.6px;top:103.2px;line-height:16px;"><span style="display:inline-block;flex-shrink:0;font-size:12px;color:#000;font-family:'Liberation Sans', sans-serif;transform:scaleX(0.8910);transform-origin:0 50%">Distance</span></div><div class="t" style="left:938.6px;top:103.2px;line-height:16px;"><span style="display:inline-block;flex-shrink:0;font-size:12px;color:#000;font-family:'Liberation Sans', sans-serif;transform:scaleX(0.8895);transform-origin:0 50%">Shadow&#x27;s&nbsp;Velocity</span></div><div class="ed" style="left:852px;top:118px;width:72px;height:20px;background:#fff;line-height:18px;padding-left:2px"><span style="display:inline-block;flex-shrink:0;font-size:12px;color:#000;font-family:'Liberation Sans', sans-serif;transform:scaleX(0.8974);transform-origin:0 50%">605063547</span></div><div class="t" style="left:924.6px;top:127.0px;line-height:16px;"><span style="display:inline-block;flex-shrink:0;font-size:12px;color:#000;font-family:'Liberation Sans', sans-serif;transform:scaleX(0.8565);transform-origin:0 50%">km</span></div><div class="ed" style="left:948px;top:118px;width:48px;height:20px;background:#fff;line-height:18px;padding-left:2px"><span style="display:inline-block;flex-shrink:0;font-size:12px;color:#000;font-family:'Liberation Sans', sans-serif;transform:scaleX(0.9156);transform-origin:0 50%">11948.2</span></div><div class="t" style="left:996.6px;top:127.0px;line-height:16px;"><span style="display:inline-block;flex-shrink:0;font-size:12px;color:#000;font-family:'Liberation Sans', sans-serif;transform:scaleX(0.9249);transform-origin:0 50%">m/sec</span></div><div class="gb" style="left:845px;top:148px;width:183px;height:106px"></div><div class="t gl" style="left:851px;top:140px;line-height:16px;width:153.0px;overflow:hidden"><span style="display:inline-block;flex-shrink:0;font-size:12.5px;font-weight:bold;color:#000;font-family:'Liberation Sans', sans-serif;transform:scaleX(0.9330);transform-origin:0 50%">Frame&nbsp;range&nbsp;of&nbsp;Star&nbsp;&amp;&nbsp;BKG</span></div><div class="t" style="left:852px;top:153.2px;line-height:16px;"><span style="display:inline-block;flex-shrink:0;font-size:12px;color:#000;font-family:'Liberation Sans', sans-serif;transform:scaleX(0.8962);transform-origin:0 50%">Appearance</span></div><div class="t" style="left:916.7px;top:154.5px;line-height:16px;"><span style="display:inline-block;flex-shrink:0;font-size:13px;font-weight:bold;color:#000;font-family:'Liberation Sans', sans-serif;transform:scaleX(0.8935);transform-origin:0 50%">before</span></div><div class="t" style="left:959.7px;top:154.5px;line-height:16px;"><span style="display:inline-block;flex-shrink:0;font-size:13px;font-weight:bold;color:#000;font-family:'Liberation Sans', sans-serif;transform:scaleX(0.8981);transform-origin:0 50%">Step</span></div><div class="t" style="left:995.9px;top:154.5px;line-height:16px;"><span style="display:inline-block;flex-shrink:0;font-size:13px;font-weight:bold;color:#000;font-family:'Liberation Sans', sans-serif;transform:scaleX(0.8979);transform-origin:0 50%">after</span></div><div class="ed" style="left:852px;top:169px;width:40px;height:18px;background:#fff;line-height:16px;padding-left:2px"><span style="display:inline-block;flex-shrink:0;font-size:12px;color:#000;font-family:'Liberation Sans', sans-serif;transform:scaleX(0.8909);transform-origin:0 50%">1567.2</span></div><div class="bt" style="left:894px;top:168px;width:23px;height:17px;line-height:16px;padding-top:0px;"><span style="display:inline-block;flex-shrink:0;font-size:12px;color:#000;font-family:'Liberation Sans', sans-serif;transform:scaleX(0.7689);transform-origin:50% 50%">Fix</span></div><div class="ed" style="left:926px;top:170px;width:28px;height:19px;background:#fff;line-height:17px;padding-left:2px"><span style="display:inline-block;flex-shrink:0;font-size:12px;color:#000;font-family:'Liberation Sans', sans-serif;transform:scaleX(1.1621);transform-origin:0 50%">-1</span></div><div class="bt" style="left:927px;top:190px;width:14.0px;height:16px;line-height:16px;padding-top:0px;"></div><div class="bt" style="left:941.0px;top:190px;width:14.0px;height:16px;line-height:16px;padding-top:0px;"></div><div class="ed" style="left:926px;top:213px;width:28px;height:18px;background:#fff;line-height:16px;padding-left:2px"><span style="display:inline-block;flex-shrink:0;font-size:12px;color:#000;font-family:'Liberation Sans', sans-serif;transform:scaleX(1.1621);transform-origin:0 50%">-5</span></div><div class="bt" style="left:927px;top:233px;width:14.0px;height:16px;line-height:16px;padding-top:0px;"></div><div class="bt" style="left:941.0px;top:233px;width:14.0px;height:16px;line-height:16px;padding-top:0px;"></div><div class="ed" style="left:961px;top:170px;width:27px;height:19px;background:#fff;line-height:17px;padding-left:2px"><span style="display:inline-block;flex-shrink:0;font-size:12px;color:#000;font-family:'Liberation Sans', sans-serif;transform:scaleX(0.9290);transform-origin:0 50%">0</span></div><div class="bt" style="left:962px;top:190px;width:13.5px;height:16px;line-height:16px;padding-top:0px;"></div><div class="bt" style="left:975.5px;top:190px;width:13.5px;height:16px;line-height:16px;padding-top:0px;"></div><div class="ed" style="left:961px;top:213px;width:27px;height:18px;background:#fff;line-height:16px;padding-left:2px"><span style="display:inline-block;flex-shrink:0;font-size:12px;color:#000;font-family:'Liberation Sans', sans-serif;transform:scaleX(0.9290);transform-origin:0 50%">0</span></div><div class="bt" style="left:962px;top:233px;width:13.5px;height:16px;line-height:16px;padding-top:0px;"></div><div class="bt" style="left:975.5px;top:233px;width:13.5px;height:16px;line-height:16px;padding-top:0px;"></div><div class="ed" style="left:997px;top:170px;width:25px;height:19px;background:#fff;line-height:17px;padding-left:2px"><span style="display:inline-block;flex-shrink:0;font-size:12px;color:#000;font-family:'Liberation Sans', sans-serif;transform:scaleX(0.9290);transform-origin:0 50%">31</span></div><div class="bt" style="left:998px;top:190px;width:13.5px;height:16px;line-height:16px;padding-top:0px;"></div><div class="bt" style="left:1011.5px;top:190px;width:13.5px;height:16px;line-height:16px;padding-top:0px;"></div><div class="ed" style="left:997px;top:213px;width:25px;height:18px;background:#fff;line-height:16px;padding-left:2px"><span style="display:inline-block;flex-shrink:0;font-size:12px;color:#000;font-family:'Liberation Sans', sans-serif;transform:scaleX(0.9290);transform-origin:0 50%">6</span></div><div class="bt" style="left:998px;top:233px;width:13.5px;height:16px;line-height:16px;padding-top:0px;"></div><div class="bt" style="left:1011.5px;top:233px;width:13.5px;height:16px;line-height:16px;padding-top:0px;"></div><div class="t" style="left:852px;top:185.2px;line-height:16px;"><span style="display:inline-block;flex-shrink:0;font-size:12px;color:#000;font-family:'Liberation Sans', sans-serif;transform:scaleX(0.8613);transform-origin:0 50%">Intermidiate</span></div><div class="ed" style="left:852px;top:199px;width:40px;height:19px;background:#fff;line-height:17px;padding-left:2px"><span style="display:inline-block;flex-shrink:0;font-size:12px;color:#000;font-family:'Liberation Sans', sans-serif;transform:scaleX(0.8825);transform-origin:0 50%">780.8</span></div><div class="ck" style="left:895px;top:201px;width:12px;height:12px"></div><div class="t" style="left:912.6px;top:198.2px;line-height:16px;"><span style="display:inline-block;flex-shrink:0;font-size:12px;color:#000;font-family:'Liberation Sans', sans-serif;transform:scaleX(0.7962);transform-origin:0 50%">D</span></div><div class="t" style="left:852px;top:217.3px;line-height:16px;"><span style="display:inline-block;flex-shrink:0;font-size:12px;color:#000;font-family:'Liberation Sans', sans-serif;transform:scaleX(0.8920);transform-origin:0 50%">Disappearance</span></div><div class="ed" style="left:852px;top:231px;width:40px;height:18px;background:#fff;line-height:16px;padding-left:2px"><span style="display:inline-block;flex-shrink:0;font-size:12px;color:#000;font-family:'Liberation Sans', sans-serif;transform:scaleX(0.9672);transform-origin:0 50%">-4.7</span></div><div class="bt" style="left:894px;top:232px;width:23px;height:17px;line-height:16px;padding-top:0px;"><span style="display:inline-block;flex-shrink:0;font-size:12px;color:#000;font-family:'Liberation Sans', sans-serif;transform:scaleX(0.7689);transform-origin:50% 50%">Fix</span></div><div class="gb" style="left:845px;top:264px;width:183px;height:46px"></div><div class="t gl" style="left:851px;top:256px;line-height:16px;width:162.0px;overflow:hidden"><span style="display:inline-block;flex-shrink:0;font-size:12.5px;font-weight:bold;color:#000;font-family:'Liberation Sans', sans-serif;transform:scaleX(0.9401);transform-origin:0 50%">Frame&nbsp;Range&nbsp;for&nbsp;Processing</span></div><div class="ed" style="left:852px;top:275px;width:32px;height:17px;background:#fff;line-height:15px;padding-left:2px"><span style="display:inline-block;flex-shrink:0;font-size:12px;color:#000;font-family:'Liberation Sans', sans-serif;transform:scaleX(0.8435);transform-origin:0 50%">-5</span></div><div class="bt" style="left:852px;top:292px;width:16.5px;height:16px;line-height:16px;padding-top:0px;"></div><div class="bt" style="left:868.5px;top:292px;width:16.5px;height:16px;line-height:16px;padding-top:0px;"></div><div class="ed" style="left:900px;top:275px;width:32px;height:17px;background:#fff;line-height:15px;padding-left:2px"><span style="display:inline-block;flex-shrink:0;font-size:12px;color:#000;font-family:'Liberation Sans', sans-serif;transform:scaleX(0.8241);transform-origin:0 50%">31</span></div><div class="bt" style="left:900px;top:292px;width:16.5px;height:16px;line-height:16px;padding-top:0px;"></div><div class="bt" style="left:916.5px;top:292px;width:16.5px;height:16px;line-height:16px;padding-top:0px;"></div><div class="ck" style="left:948px;top:275px;width:12px;height:12px"></div><svg class="a" style="left:948px;top:275px" width="12" height="12" viewBox="0 0 13 13"><path d="M3 6 L5.2 8.4 L10 3.6" stroke="#000" stroke-width="2" fill="none"/></svg><div class="t" style="left:966.5px;top:272.3px;line-height:16px;"><span style="display:inline-block;flex-shrink:0;font-size:12px;color:#000;font-family:'Liberation Sans', sans-serif;transform:scaleX(0.8773);transform-origin:0 50%">SelectArea</span></div><div class="t" style="left:940.6px;top:292.7px;line-height:16px;"><span style="display:inline-block;flex-shrink:0;font-size:12px;color:#000;font-family:'Liberation Sans', sans-serif;transform:scaleX(0.8760);transform-origin:0 50%">DataNum</span></div><div class="ed" style="left:988px;top:288px;width:32px;height:20px;background:#fff;line-height:18px;padding-left:2px"><span style="display:inline-block;flex-shrink:0;font-size:13px;font-weight:bold;color:#000;font-family:'Liberation Sans', sans-serif;transform:scaleX(0.8990);transform-origin:0 50%">37</span></div><div class="gb" style="left:845px;top:318px;width:183px;height:122px"></div><div class="t gl" style="left:851px;top:310px;line-height:16px;width:128.8px;overflow:hidden"><span style="display:inline-block;flex-shrink:0;font-size:12.5px;font-weight:bold;color:#000;font-family:'Liberation Sans', sans-serif;transform:scaleX(0.9625);transform-origin:0 50%">Central&nbsp;Time&nbsp;of&nbsp;&nbsp;Event</span></div><div class="t" style="left:852px;top:326.9px;line-height:16px;"><span style="display:inline-block;flex-shrink:0;font-size:12.5px;font-weight:bold;color:#000;font-family:'Liberation Sans', sans-serif;transform:scaleX(0.9500);transform-origin:0 50%">Component&nbsp;1&nbsp;&nbsp;[Single&nbsp;Star]</span></div><div class="t" style="left:852px;top:341.2px;line-height:16px;"><span style="display:inline-block;flex-shrink:0;font-size:12px;color:#000;font-family:'Liberation Sans', sans-serif;transform:scaleX(0.8552);transform-origin:0 50%">Frame&nbsp;Number</span></div><div class="t" style="left:940.6px;top:341.2px;line-height:16px;"><span style="display:inline-block;flex-shrink:0;font-size:12px;color:#000;font-family:'Liberation Sans', sans-serif;transform:scaleX(0.8784);transform-origin:0 50%">Offset&nbsp;Time</span></div><div class="ed" style="left:852px;top:356px;width:64px;height:20px;background:#fff;line-height:18px;padding-left:3px"><span style="display:inline-block;flex-shrink:0;font-size:13px;font-weight:bold;color:#000;font-family:'Liberation Sans', sans-serif;transform:scaleX(0.9714);transform-origin:0 50%">400.0</span></div><div class="t" style="left:922px;top:361.6px;line-height:16px;"><span style="display:inline-block;flex-shrink:0;font-size:12px;font-weight:bold;color:#000;font-family:'Liberation Sans', sans-serif;transform:scaleX(0.8562);transform-origin:0 50%">+</span></div><div class="ed" style="left:936px;top:356px;width:33px;height:20px;background:#fff;line-height:18px;padding-left:3px"><span style="display:inline-block;flex-shrink:0;font-size:13px;font-weight:bold;color:#000;font-family:'Liberation Sans', sans-serif;transform:scaleX(0.8622);transform-origin:0 50%">-51</span></div><div class="t" style="left:970.6px;top:363.3px;line-height:16px;"><span style="display:inline-block;flex-shrink:0;font-size:12px;color:#000;font-family:'Liberation Sans', sans-serif;transform:scaleX(0.8542);transform-origin:0 50%">millisecond</span></div><div class="t" style="left:852.4px;top:381.0px;line-height:16px;"><span style="display:inline-block;flex-shrink:0;font-size:12px;color:#000;font-family:'Liberation Sans', sans-serif;transform:scaleX(0.8347);transform-origin:0 50%">Error(1&nbsp;sigma)</span></div><div class="t" style="left:920.6px;top:381.0px;line-height:16px;"><span style="display:inline-block;flex-shrink:0;font-size:12px;font-weight:bold;color:#000;font-family:'Liberation Sans', sans-serif;transform:scaleX(0.9764);transform-origin:0 50%">+/-</span></div><div class="ed" style="left:936px;top:377px;width:33px;height:19px;background:#fff;line-height:17px;padding-left:3px"><span style="display:inline-block;flex-shrink:0;font-size:13px;font-weight:bold;color:#000;font-family:'Liberation Sans', sans-serif;transform:scaleX(0.8506);transform-origin:0 50%">37</span></div><div class="t" style="left:970.6px;top:381.0px;line-height:16px;"><span style="display:inline-block;flex-shrink:0;font-size:12px;color:#000;font-family:'Liberation Sans', sans-serif;transform:scaleX(0.8542);transform-origin:0 50%">millisecond</span></div><div class="a" style="left:852px;top:400px;width:170px;height:1px;background:#a8c8e8"></div><div class="t" style="left:852px;top:402.0px;line-height:16px;"><span style="display:inline-block;flex-shrink:0;font-size:12.5px;font-weight:bold;color:#000;font-family:'Liberation Sans', sans-serif;transform:scaleX(0.9576);transform-origin:0 50%">Component&nbsp;2&nbsp;&nbsp;&nbsp;[Double&nbsp;Star]</span></div><div class="t" style="left:860.4px;top:420.8px;line-height:16px;"><span style="display:inline-block;flex-shrink:0;font-size:12px;color:#000;font-family:'Liberation Sans', sans-serif;transform:scaleX(0.8817);transform-origin:0 50%">Offset&nbsp;Time</span></div><div class="t" style="left:922px;top:420.8px;line-height:16px;"><span style="display:inline-block;flex-shrink:0;font-size:12px;font-weight:bold;color:#000;font-family:'Liberation Sans', sans-serif;transform:scaleX(0.8562);transform-origin:0 50%">+</span></div><div class="ed" style="left:936px;top:417px;width:33px;height:20px;background:#fff;line-height:18px;padding-left:3px"></div><div class="t" style="left:972.7px;top:420.8px;line-height:16px;"><span style="display:inline-block;flex-shrink:0;font-size:12px;color:#000;font-family:'Liberation Sans', sans-serif;transform:scaleX(0.8542);transform-origin:0 50%">millisecond</span></div><div class="gb" style="left:845px;top:448px;width:183px;height:45px"></div><div class="t gl" style="left:851px;top:440px;line-height:16px;width:143.0px;overflow:hidden"><span style="display:inline-block;flex-shrink:0;font-size:12.5px;font-weight:bold;color:#000;font-family:'Liberation Sans', sans-serif;transform:scaleX(0.9575);transform-origin:0 50%">Speed&nbsp;of&nbsp;Fresnel&nbsp;Pattern</span></div><div class="t" style="left:852px;top:456.0px;line-height:16px;"><span style="display:inline-block;flex-shrink:0;font-size:12px;color:#000;font-family:'Liberation Sans', sans-serif;transform:scaleX(0.9074);transform-origin:0 50%">Rate</span></div><div class="t" style="left:931.7px;top:456.0px;line-height:16px;"><span style="display:inline-block;flex-shrink:0;font-size:12px;color:#000;font-family:'Liberation Sans', sans-serif;transform:scaleX(0.8860);transform-origin:0 50%">Contact&nbsp;Angle</span></div><div class="ed" style="left:852px;top:471px;width:48px;height:19px;background:#fff;line-height:17px;padding-left:2px"><span style="display:inline-block;flex-shrink:0;font-size:13px;font-weight:bold;color:#000;font-family:'Liberation Sans', sans-serif;transform:scaleX(0.9783);transform-origin:0 50%">0.1720</span></div><div class="ed" style="left:932px;top:471px;width:48px;height:19px;background:#fff;line-height:17px;padding-left:3px"><span style="display:inline-block;flex-shrink:0;font-size:13px;font-weight:bold;color:#000;font-family:'Liberation Sans', sans-serif;transform:scaleX(0.9288);transform-origin:0 50%">80.1</span></div><div class="t" style="left:988.9px;top:476.0px;line-height:16px;"><span style="display:inline-block;flex-shrink:0;font-size:12px;color:#000;font-family:'Liberation Sans', sans-serif;transform:scaleX(0.8671);transform-origin:0 50%">degree</span></div><div class="gb" style="left:845px;top:501px;width:183px;height:64px"></div><div class="a" style="left:851px;top:494px;width:151px;height:16px;background:#f0f0f0"></div><div class="ck" style="left:852px;top:497px;width:12px;height:12px"></div><div class="t" style="left:871.7px;top:494.8px;line-height:16px;"><span style="display:inline-block;flex-shrink:0;font-size:12.5px;font-weight:bold;color:#000;font-family:'Liberation Sans', sans-serif;transform:scaleX(0.9418);transform-origin:0 50%">Double&nbsp;Star&nbsp;Analyzing</span></div><div class="t" style="left:852.4px;top:510.2px;line-height:16px;"><span style="display:inline-block;flex-shrink:0;font-size:12px;color:#000;font-family:'Liberation Sans', sans-serif;transform:scaleX(0.8923);transform-origin:0 50%">Step&nbsp;Hight</span></div><div class="t" style="left:941.1px;top:510.2px;line-height:16px;"><span style="display:inline-block;flex-shrink:0;font-size:12px;color:#000;font-family:'Liberation Sans', sans-serif;transform:scaleX(0.8830);transform-origin:0 50%">Time&nbsp;Difference</span></div><div class="bt" style="left:852px;top:527px;width:17px;height:12.0px;line-height:16px;padding-top:0px;"></div><div class="bt" style="left:852px;top:539.0px;width:17px;height:12.0px;line-height:16px;padding-top:0px;"></div><div class="bt" style="left:870px;top:527px;width:16px;height:12.0px;line-height:16px;padding-top:0px;"></div><div class="bt" style="left:870px;top:539.0px;width:16px;height:12.0px;line-height:16px;padding-top:0px;"></div><div class="ed" style="left:885px;top:527px;width:29px;height:21px;background:#fff;line-height:19px;padding-left:0px"><span style="display:inline-block;flex-shrink:0;font-size:12px;color:#a0a0a0;font-family:'Liberation Sans', sans-serif;transform:scaleX(0.9420);transform-origin:0 50%">50.0</span></div><div class="t" style="left:909px;top:541.7px;line-height:16px;"><span style="display:inline-block;flex-shrink:0;font-size:10px;color:#000;font-family:'Liberation Sans', sans-serif;transform:scaleX(0.6748);transform-origin:0 50%">%</span></div><div class="t" style="left:857.5px;top:549.4px;line-height:16px;"><span style="display:inline-block;flex-shrink:0;font-size:12px;color:#000;font-family:'Liberation Sans', sans-serif;transform:scaleX(0.7492);transform-origin:0 50%">1</span></div><div class="t" style="left:870.6px;top:549.4px;line-height:16px;"><span style="display:inline-block;flex-shrink:0;font-size:12px;color:#000;font-family:'Liberation Sans', sans-serif;transform:scaleX(0.7793);transform-origin:0 50%">0.1</span></div><div class="bt" style="left:924px;top:527px;width:16px;height:12.0px;line-height:16px;padding-top:0px;"></div><div class="bt" style="left:924px;top:539.0px;width:16px;height:12.0px;line-height:16px;padding-top:0px;"></div><div class="bt" style="left:940px;top:527px;width:16px;height:12.0px;line-height:16px;padding-top:0px;"></div><div class="bt" style="left:940px;top:539.0px;width:16px;height:12.0px;line-height:16px;padding-top:0px;"></div><div class="bt" style="left:956px;top:527px;width:16px;height:12.0px;line-height:16px;padding-top:0px;"></div><div class="bt" style="left:956px;top:539.0px;width:16px;height:12.0px;line-height:16px;padding-top:0px;"></div><div class="ed" style="left:973px;top:527px;width:47px;height:20px;background:#fff;line-height:18px;padding-left:2px"><span style="display:inline-block;flex-shrink:0;font-size:12px;color:#a0a0a0;font-family:'Liberation Sans', sans-serif;transform:scaleX(0.8990);transform-origin:0 50%">0</span></div><div class="t" style="left:973px;top:546.0px;line-height:16px;"><span style="display:inline-block;flex-shrink:0;font-size:12px;color:#000;font-family:'Liberation Sans', sans-serif;transform:scaleX(0.8424);transform-origin:0 50%">millisecond</span></div><div class="gb" style="left:845px;top:573px;width:183px;height:52px"></div><div class="a" style="left:851px;top:566px;width:159px;height:16px;background:#f0f0f0"></div><div class="ck" style="left:853px;top:570px;width:12px;height:12px"></div><div class="t" style="left:872.3px;top:566.5px;line-height:16px;"><span style="display:inline-block;flex-shrink:0;font-size:12.5px;font-weight:bold;color:#000;font-family:'Liberation Sans', sans-serif;transform:scaleX(0.9389);transform-origin:0 50%">Star&#x27;s&nbsp;Angular&nbsp;Diameter</span></div><div class="bt" style="left:853px;top:585px;width:16px;height:11.0px;line-height:16px;padding-top:0px;"></div><div class="bt" style="left:853px;top:596.0px;width:16px;height:11.0px;line-height:16px;padding-top:0px;"></div><div class="ed" style="left:870px;top:585px;width:31px;height:18px;background:#fff;line-height:16px;padding-left:2px"><span style="display:inline-block;flex-shrink:0;font-size:12px;color:#a0a0a0;font-family:'Liberation Sans', sans-serif;transform:scaleX(0.9591);transform-origin:0 50%">0.0</span></div><div class="t" style="left:901.9px;top:585.7px;line-height:16px;"><span style="display:inline-block;flex-shrink:0;font-size:12px;color:#000;font-family:'Liberation Sans', sans-serif;transform:scaleX(0.8586);transform-origin:0 50%">milli&nbsp;arc&nbsp;second</span></div><div class="t" style="left:861.4px;top:609.1px;line-height:16px;"><span style="display:inline-block;flex-shrink:0;font-size:12px;color:#000;font-family:'Liberation Sans', sans-serif;transform:scaleX(0.8873);transform-origin:0 50%">Intensity&nbsp;at&nbsp;event&nbsp;centre:</span></div><div class="ed" style="left:981px;top:604px;width:32px;height:18px;background:#fff;line-height:16px;padding-left:2px"><span style="display:inline-block;flex-shrink:0;font-size:13px;font-weight:bold;color:#808080;font-family:'Liberation Sans', sans-serif;transform:scaleX(0.9881);transform-origin:0 50%">25.0</span></div><div class="t" style="left:1013.6px;top:610.0px;line-height:16px;"><span style="display:inline-block;flex-shrink:0;font-size:12px;color:#000;font-family:'Liberation Sans', sans-serif;transform:scaleX(0.7498);transform-origin:0 50%">%</span></div><div class="gb" style="left:845px;top:633px;width:182px;height:48px"></div><div class="t gl" style="left:851.8px;top:625px;line-height:16px;width:63.5px;overflow:hidden"><span style="display:inline-block;flex-shrink:0;font-size:12.5px;font-weight:bold;color:#000;font-family:'Liberation Sans', sans-serif;transform:scaleX(0.9126);transform-origin:0 50%">Processing</span></div><svg class="a" style="left:852.4px;top:643.2px" width="12" height="12" viewBox="0 0 12 12"><circle cx="6" cy="6" r="5.5" fill="#fff"/><path d="M1.5 9.2 A5 5 0 0 1 9.2 1.5" stroke="#a0a0a0" stroke-width="1" fill="none"/><path d="M2.3 8.6 A4 4 0 0 1 8.6 2.3" stroke="#696969" stroke-width="1" fill="none"/></svg><div class="t" style="left:870.7px;top:641.2px;line-height:16px;"><span style="display:inline-block;flex-shrink:0;font-size:12px;color:#000;font-family:'Liberation Sans', sans-serif;transform:scaleX(0.8815);transform-origin:0 50%">for&nbsp;Occultation</span></div><svg class="a" style="left:948.7px;top:643.2px" width="12" height="12" viewBox="0 0 12 12"><circle cx="6" cy="6" r="5.5" fill="#fff"/><path d="M1.5 9.2 A5 5 0 0 1 9.2 1.5" stroke="#a0a0a0" stroke-width="1" fill="none"/><path d="M2.3 8.6 A4 4 0 0 1 8.6 2.3" stroke="#696969" stroke-width="1" fill="none"/><circle cx="6" cy="6" r="2" fill="#000"/></svg><div class="t" style="left:966px;top:641.2px;line-height:16px;"><span style="display:inline-block;flex-shrink:0;font-size:12px;color:#000;font-family:'Liberation Sans', sans-serif;transform:scaleX(0.8609);transform-origin:0 50%">for&nbsp;Grazing</span></div><div class="t" style="left:850.8px;top:661.7px;line-height:16px;"><span style="display:inline-block;flex-shrink:0;font-size:12px;color:#000;font-family:'Liberation Sans', sans-serif;transform:scaleX(0.8458);transform-origin:0 50%">Sum-Squared&nbsp;Error</span></div><div class="ed" style="left:943px;top:659px;width:79px;height:18px;background:#fff;line-height:16px;padding-left:2px"><span style="display:inline-block;flex-shrink:0;font-size:13px;font-weight:bold;color:#000;font-family:'Liberation Sans', sans-serif;transform:scaleX(0.9267);transform-origin:0 50%">833481</span></div><div class="ck" style="left:847px;top:690px;width:12px;height:12px"></div><div class="t" style="left:864.5px;top:688.3px;line-height:16px;"><span style="display:inline-block;flex-shrink:0;font-size:12px;color:#000;font-family:'Liberation Sans', sans-serif;transform:scaleX(0.8778);transform-origin:0 50%">Mag&nbsp;drop</span></div><div class="ed" style="left:914px;top:687px;width:40px;height:18px;background:#fff;line-height:16px;padding-left:2px"><span style="display:inline-block;flex-shrink:0;font-size:12px;color:#000;font-family:'Liberation Sans', sans-serif;transform:scaleX(0.9292);transform-origin:0 50%">5.8</span></div><div class="t" style="left:960.8px;top:688.3px;line-height:16px;"><span style="display:inline-block;flex-shrink:0;font-size:12px;color:#000;font-family:'Liberation Sans', sans-serif;transform:scaleX(0.8721);transform-origin:0 50%">considered</span></div><div class="a" style="left:848px;top:708px;width:177px;height:10px;border:1px solid #bcbcbc;background:#e6e6e6"></div><div class="bt" style="left:848px;top:720px;width:177px;height:25px;line-height:16px;padding-top:0px;"><span style="display:inline-block;flex-shrink:0;font-size:12.5px;font-weight:bold;color:#000;font-family:'Liberation Sans', sans-serif;transform:scaleX(0.9496);transform-origin:50% 50%">Fit&nbsp;to&nbsp;Diffraction&nbsp;Curve</span></div><div class="ck" style="left:852px;top:753px;width:13px;height:13px"></div><svg class="a" style="left:852px;top:753px" width="13" height="13" viewBox="0 0 13 13"><path d="M3 6 L5.2 8.4 L10 3.6" stroke="#000" stroke-width="2" fill="none"/></svg><div class="t" style="left:870.7px;top:751.2px;line-height:16px;"><span style="display:inline-block;flex-shrink:0;font-size:12px;color:#000;font-family:'Liberation Sans', sans-serif;transform:scaleX(0.8755);transform-origin:0 50%">Pop&nbsp;up</span></div><div class="bt" style="left:908px;top:748px;width:115px;height:22px;line-height:16px;padding-top:0px;"><span style="display:inline-block;flex-shrink:0;font-size:12.5px;font-weight:bold;color:#000;font-family:'Liberation Sans', sans-serif;transform:scaleX(0.9473);transform-origin:50% 50%">Magnitude&nbsp;Calc</span></div><div class="a" style="left:845px;top:772px;width:183px;height:1px;background:#a0a0a0"></div><div class="a" style="left:845px;top:773px;width:183px;height:1px;background:#fff"></div><div class="ck" style="left:892px;top:781px;width:12px;height:12px"></div><div class="t" style="left:910.6px;top:777.8px;line-height:16px;"><span style="display:inline-block;flex-shrink:0;font-size:12px;color:#000;font-family:'Liberation Sans', sans-serif;transform:scaleX(0.8632);transform-origin:0 50%">More</span></div><div class="win" style="left:1040px;top:12px;width:470px;height:859px;border-color:#a8a8a8;box-shadow:0 10px 30px rgba(0,0,0,0.4), 0 0 12px rgba(0,0,0,0.3)"></div><div class="a" style="left:1041px;top:13px;width:468px;height:27px;background:#f3f3f3;border-radius:7px 7px 0 0"></div><svg class="a" style="left:1048px;top:18px" width="16" height="16" viewBox="0 0 16 16"><rect x="0" y="0" width="16" height="16" fill="#0a10e8"/><path d="M0 14 L4 12 L8 15 L12 13 L16 16 H0Z M9 2 L13 4 L16 2 V6 L12 5Z M1 3 L3 5 L0 7Z" fill="#00007a"/><rect x="3" y="7" width="13" height="2" fill="#ffff00"/><rect x="4" y="0" width="2" height="16" fill="#ffff00"/><path d="M5 2 L6.8 7 L10 8 L6.8 9 L5 14 L3.2 9 L0 8 L3.2 7Z" fill="#ffff00"/><rect x="8" y="1" width="1" height="1" fill="#e0e8ff"/><rect x="10" y="1" width="1" height="1" fill="#e0e8ff"/><rect x="12" y="1" width="1" height="1" fill="#e0e8ff"/><rect x="14" y="1" width="1" height="1" fill="#e0e8ff"/><rect x="8" y="13" width="1" height="1" fill="#e0e8ff"/><rect x="10" y="13" width="1" height="1" fill="#e0e8ff"/><rect x="12" y="13" width="1" height="1" fill="#e0e8ff"/><rect x="14" y="13" width="1" height="1" fill="#e0e8ff"/></svg><div class="t" style="left:1069.3px;top:19.3px;line-height:16px;"><span style="display:inline-block;flex-shrink:0;font-size:12.6px;color:#1a1a1a;font-family:'Liberation Sans', sans-serif;transform:scaleX(0.9532);transform-origin:0 50%">Magnitude&nbsp;Calculator</span></div><svg class="a" style="left:0;top:0" width="1512" height="879" viewBox="0 0 1512 879"><path d="M1391 27.5 h10" stroke="#1a1a1a" stroke-width="1"/><rect x="1436.5" y="22.5" width="9" height="9" rx="1" stroke="#1a1a1a" fill="none" stroke-width="1"/><path d="M1482 22 l10 10 M1492 22 l-10 10" stroke="#1a1a1a" stroke-width="1"/></svg><div class="gb" style="left:1041px;top:48px;width:141px;height:38px"></div><div class="t gl" style="left:1047.6px;top:40px;line-height:16px;width:122.5px;overflow:hidden"><span style="display:inline-block;flex-shrink:0;font-size:12.5px;font-weight:bold;color:#000;font-family:'Liberation Sans', sans-serif;transform:scaleX(0.9376);transform-origin:0 50%">Selection&nbsp;for&nbsp;analysis</span></div><svg class="a" style="left:1049px;top:56.4px" width="12" height="12" viewBox="0 0 12 12"><circle cx="6" cy="6" r="5.5" fill="#fff"/><path d="M1.5 9.2 A5 5 0 0 1 9.2 1.5" stroke="#a0a0a0" stroke-width="1" fill="none"/><path d="M2.3 8.6 A4 4 0 0 1 8.6 2.3" stroke="#696969" stroke-width="1" fill="none"/><circle cx="6" cy="6" r="2" fill="#000"/></svg><div class="t" style="left:1067.5px;top:54.4px;line-height:16px;"><span style="display:inline-block;flex-shrink:0;font-size:12.5px;font-weight:bold;color:#000;font-family:'Liberation Sans', sans-serif;transform:scaleX(0.9112);transform-origin:0 50%">Timing&nbsp;only</span></div><svg class="a" style="left:1049px;top:70.5px" width="12" height="12" viewBox="0 0 12 12"><circle cx="6" cy="6" r="5.5" fill="#fff"/><path d="M1.5 9.2 A5 5 0 0 1 9.2 1.5" stroke="#a0a0a0" stroke-width="1" fill="none"/><path d="M2.3 8.6 A4 4 0 0 1 8.6 2.3" stroke="#696969" stroke-width="1" fill="none"/></svg><div class="t" style="left:1067.5px;top:68.5px;line-height:16px;"><span style="display:inline-block;flex-shrink:0;font-size:12.5px;font-weight:bold;color:#000;font-family:'Liberation Sans', sans-serif;transform:scaleX(0.9362);transform-origin:0 50%">Doublestar&nbsp;and&nbsp;time</span></div><div class="t" style="left:1108.1px;top:91.2px;line-height:16px;"><span style="display:inline-block;flex-shrink:0;font-size:14.5px;color:#000;font-family:'Liberation Sans', sans-serif;transform:scaleX(1.1430);transform-origin:0 50%">First&nbsp;Event</span></div><div class="t" style="left:1088.6px;top:114.9px;line-height:16px;"><span style="display:inline-block;flex-shrink:0;font-size:14.5px;color:#000;font-family:'Liberation Sans', sans-serif;transform:scaleX(1.1098);transform-origin:0 50%">Second&nbsp;Event</span></div><div class="t" style="left:1120.8px;top:140.4px;line-height:16px;"><span style="display:inline-block;flex-shrink:0;font-size:13px;font-weight:bold;color:#000;font-family:'Liberation Sans', sans-serif;transform:scaleX(0.9032);transform-origin:0 50%">Combined</span></div><div class="gb" style="left:1191px;top:48px;width:140px;height:116px"></div><div class="t gl" style="left:1197.6px;top:40px;line-height:16px;width:114.6px;overflow:hidden"><span style="display:inline-block;flex-shrink:0;font-size:12.5px;font-weight:bold;color:#000;font-family:'Liberation Sans', sans-serif;transform:scaleX(0.9425);transform-origin:0 50%">Statistic&nbsp;Calculation</span></div><div class="t" style="left:1210px;top:55.7px;line-height:16px;"><span style="display:inline-block;flex-shrink:0;font-size:14.5px;color:#000;font-family:'Liberation Sans', sans-serif;transform:scaleX(1.0025);transform-origin:0 50%">Luminous&nbsp;Intensity</span></div><div class="t" style="left:1206.4px;top:67.9px;line-height:16px;"><span style="display:inline-block;flex-shrink:0;font-size:12px;color:#000;font-family:'Liberation Sans', sans-serif;transform:scaleX(0.9128);transform-origin:0 50%">Average</span></div><div class="t" style="left:1264.4px;top:67.9px;line-height:16px;"><span style="display:inline-block;flex-shrink:0;font-size:12px;color:#000;font-family:'Liberation Sans', sans-serif;transform:scaleX(0.9283);transform-origin:0 50%">Error&nbsp;Margin</span></div><div class="ed" style="left:1200px;top:84px;width:48px;height:20px;background:#fff;line-height:18px;padding-left:3px"><span style="display:inline-block;flex-shrink:0;font-size:13px;font-weight:bold;color:#000;font-family:'Liberation Sans', sans-serif;transform:scaleX(0.9529);transform-origin:0 50%">785.5</span></div><div class="t" style="left:1252.9px;top:88.5px;line-height:16px;"><span style="display:inline-block;flex-shrink:0;font-size:12.5px;font-weight:bold;color:#000;font-family:'Liberation Sans', sans-serif;transform:scaleX(1.3391);transform-origin:0 50%">+/-</span></div><div class="ed" style="left:1279px;top:84px;width:41px;height:20px;background:#fff;line-height:18px;padding-left:3px"><span style="display:inline-block;flex-shrink:0;font-size:13px;font-weight:bold;color:#000;font-family:'Liberation Sans', sans-serif;transform:scaleX(0.9723);transform-origin:0 50%">21.8</span></div><div class="ed" style="left:1200px;top:107px;width:48px;height:20px;background:#fff;line-height:18px;padding-left:3px"><span style="display:inline-block;flex-shrink:0;font-size:13px;font-weight:bold;color:#000;font-family:'Liberation Sans', sans-serif;transform:scaleX(0.9529);transform-origin:0 50%">786.4</span></div><div class="t" style="left:1252.9px;top:111.5px;line-height:16px;"><span style="display:inline-block;flex-shrink:0;font-size:12.5px;font-weight:bold;color:#000;font-family:'Liberation Sans', sans-serif;transform:scaleX(1.3391);transform-origin:0 50%">+/-</span></div><div class="ed" style="left:1279px;top:107px;width:41px;height:20px;background:#fff;line-height:18px;padding-left:3px"><span style="display:inline-block;flex-shrink:0;font-size:13px;font-weight:bold;color:#000;font-family:'Liberation Sans', sans-serif;transform:scaleX(0.9723);transform-origin:0 50%">32.8</span></div><div class="ed" style="left:1200px;top:138px;width:48px;height:20px;background:#fff;line-height:18px;padding-left:3px"><span style="display:inline-block;flex-shrink:0;font-size:13px;font-weight:bold;color:#000;font-family:'Liberation Sans', sans-serif;transform:scaleX(0.9356);transform-origin:0 50%">1571.9</span></div><div class="t" style="left:1252.9px;top:142.5px;line-height:16px;"><span style="display:inline-block;flex-shrink:0;font-size:12.5px;font-weight:bold;color:#000;font-family:'Liberation Sans', sans-serif;transform:scaleX(1.3391);transform-origin:0 50%">+/-</span></div><div class="ed" style="left:1279px;top:138px;width:41px;height:20px;background:#fff;line-height:18px;padding-left:3px"><span style="display:inline-block;flex-shrink:0;font-size:13px;font-weight:bold;color:#000;font-family:'Liberation Sans', sans-serif;transform:scaleX(0.9723);transform-origin:0 50%">54.7</span></div><div class="gb" style="left:1340px;top:48px;width:141px;height:81px"></div><div class="t gl" style="left:1347.7px;top:40px;line-height:16px;width:59.7px;overflow:hidden"><span style="display:inline-block;flex-shrink:0;font-size:12.5px;font-weight:bold;color:#000;font-family:'Liberation Sans', sans-serif;transform:scaleX(0.9030);transform-origin:0 50%">Estimation</span></div><div class="t" style="left:1363.6px;top:57.0px;line-height:16px;"><span style="display:inline-block;flex-shrink:0;font-size:14.5px;font-weight:bold;color:#000;font-family:'Liberation Sans', sans-serif;transform:scaleX(0.9753);transform-origin:0 50%">Magnitude</span></div><div class="t" style="left:1359px;top:67.9px;line-height:16px;"><span style="display:inline-block;flex-shrink:0;font-size:12px;color:#000;font-family:'Liberation Sans', sans-serif;transform:scaleX(0.8546);transform-origin:0 50%">Mag.</span></div><div class="t" style="left:1414.6px;top:67.9px;line-height:16px;"><span style="display:inline-block;flex-shrink:0;font-size:12px;color:#000;font-family:'Liberation Sans', sans-serif;transform:scaleX(0.9238);transform-origin:0 50%">Error&nbsp;Margin</span></div><div class="ed" style="left:1356px;top:84px;width:40px;height:20px;background:#fff;line-height:18px;padding-left:3px"><span style="display:inline-block;flex-shrink:0;font-size:13px;font-weight:bold;color:#000;font-family:'Liberation Sans', sans-serif;transform:scaleX(0.9744);transform-origin:0 50%">14.35</span></div><div class="t" style="left:1401.9px;top:88.5px;line-height:16px;"><span style="display:inline-block;flex-shrink:0;font-size:12.5px;font-weight:bold;color:#000;font-family:'Liberation Sans', sans-serif;transform:scaleX(1.3391);transform-origin:0 50%">+/-</span></div><div class="ed" style="left:1428px;top:84px;width:40px;height:20px;background:#fff;line-height:18px;padding-left:3px"><span style="display:inline-block;flex-shrink:0;font-size:13px;font-weight:bold;color:#000;font-family:'Liberation Sans', sans-serif;transform:scaleX(0.9762);transform-origin:0 50%">0.05</span></div><div class="ed" style="left:1356px;top:107px;width:40px;height:20px;background:#fff;line-height:18px;padding-left:3px"><span style="display:inline-block;flex-shrink:0;font-size:13px;font-weight:bold;color:#000;font-family:'Liberation Sans', sans-serif;transform:scaleX(0.9744);transform-origin:0 50%">14.35</span></div><div class="t" style="left:1401.9px;top:111.5px;line-height:16px;"><span style="display:inline-block;flex-shrink:0;font-size:12.5px;font-weight:bold;color:#000;font-family:'Liberation Sans', sans-serif;transform:scaleX(1.3391);transform-origin:0 50%">+/-</span></div><div class="ed" style="left:1428px;top:107px;width:40px;height:20px;background:#fff;line-height:18px;padding-left:3px"><span style="display:inline-block;flex-shrink:0;font-size:13px;font-weight:bold;color:#000;font-family:'Liberation Sans', sans-serif;transform:scaleX(0.9762);transform-origin:0 50%">0.06</span></div><div class="t" style="left:1339px;top:130.8px;line-height:16px;"><span style="display:inline-block;flex-shrink:0;font-size:12.5px;font-weight:bold;color:#000;font-family:'Liberation Sans', sans-serif;transform:scaleX(0.9898);transform-origin:0 50%">Assuming&nbsp;Pair&#x27;s&nbsp;Mag.&nbsp;as:</span></div><div class="ed" style="left:1354px;top:149px;width:39px;height:19px;background:#fff;line-height:17px;padding-left:3px"><span style="display:inline-block;flex-shrink:0;font-size:13px;font-weight:bold;color:#000;font-family:'Liberation Sans', sans-serif;transform:scaleX(0.9191);transform-origin:0 50%">13.60</span></div><div class="bt" style="left:1394px;top:147px;width:16px;height:11.5px;line-height:16px;padding-top:0px;"></div><div class="bt" style="left:1394px;top:158.5px;width:16px;height:11.5px;line-height:16px;padding-top:0px;"></div><div class="bt" style="left:1410px;top:147px;width:16px;height:11.5px;line-height:16px;padding-top:0px;"></div><div class="bt" style="left:1410px;top:158.5px;width:16px;height:11.5px;line-height:16px;padding-top:0px;"></div><div class="bt" style="left:1426px;top:147px;width:16px;height:11.5px;line-height:16px;padding-top:0px;"></div><div class="bt" style="left:1426px;top:158.5px;width:16px;height:11.5px;line-height:16px;padding-top:0px;"></div><div class="a" style="left:1048px;top:172px;width:225px;height:2px;background:#90b8e0"></div><div class="bt" style="left:1296px;top:177px;width:200px;height:19px;line-height:16px;padding-top:0px;"><span style="display:inline-block;flex-shrink:0;font-size:12.5px;font-weight:bold;color:#000;font-family:'Liberation Sans', sans-serif;transform:scaleX(0.9437);transform-origin:50% 50%">Add&nbsp;doublestar&nbsp;result&nbsp;to&nbsp;Report</span></div><div class="a" style="left:1288px;top:197px;width:208px;height:2px;background:#90b8e0"></div><div class="gb" style="left:1041px;top:186px;width:238px;height:111px"></div><div class="t gl" style="left:1047.3px;top:178px;line-height:16px;width:172.0px;overflow:hidden"><span style="display:inline-block;flex-shrink:0;font-size:12px;color:#000;font-family:'Liberation Sans', sans-serif;transform:scaleX(0.8902);transform-origin:0 50%">Select&nbsp;the&nbsp;BaseTime&nbsp;for&nbsp;Event&nbsp;Time</span></div><div class="t" style="left:1060.3px;top:198.7px;line-height:16px;"><span style="display:inline-block;flex-shrink:0;font-size:12px;color:#000;font-family:'Liberation Sans', sans-serif;transform:scaleX(0.8713);transform-origin:0 50%">Selected&nbsp;frame&nbsp;(Base)&nbsp;:&nbsp;No.</span></div><div class="ed" style="left:1196px;top:196px;width:78px;height:19px;background:#fff;line-height:17px;padding-left:3px"></div><svg class="a" style="left:1056.5px;top:217.7px" width="12" height="12" viewBox="0 0 12 12"><circle cx="6" cy="6" r="5.5" fill="#fff"/><path d="M1.5 9.2 A5 5 0 0 1 9.2 1.5" stroke="#a0a0a0" stroke-width="1" fill="none"/><path d="M2.3 8.6 A4 4 0 0 1 8.6 2.3" stroke="#696969" stroke-width="1" fill="none"/><circle cx="6" cy="6" r="2" fill="#000"/></svg><div class="t" style="left:1074.4px;top:215.7px;line-height:16px;"><span style="display:inline-block;flex-shrink:0;font-size:12px;color:#000;font-family:'Liberation Sans', sans-serif;transform:scaleX(0.8321);transform-origin:0 50%">First&nbsp;field</span></div><svg class="a" style="left:1144.4px;top:217.7px" width="12" height="12" viewBox="0 0 12 12"><circle cx="6" cy="6" r="5.5" fill="#fff"/><path d="M1.5 9.2 A5 5 0 0 1 9.2 1.5" stroke="#a0a0a0" stroke-width="1" fill="none"/><path d="M2.3 8.6 A4 4 0 0 1 8.6 2.3" stroke="#696969" stroke-width="1" fill="none"/></svg><div class="t" style="left:1162.3px;top:215.7px;line-height:16px;"><span style="display:inline-block;flex-shrink:0;font-size:12px;color:#000;font-family:'Liberation Sans', sans-serif;transform:scaleX(0.8918);transform-origin:0 50%">Second&nbsp;field</span></div><div class="t" style="left:1248.3px;top:214.9px;line-height:16px;"><span style="display:inline-block;flex-shrink:0;font-size:12px;color:#000;font-family:'Liberation Sans', sans-serif;transform:scaleX(0.8725);transform-origin:0 50%">Graph</span></div><div class="ed" style="left:1056px;top:235px;width:19px;height:20px;background:#fff;line-height:18px;padding-left:2px"><span style="display:inline-block;flex-shrink:0;font-size:12px;color:#000;font-family:'Liberation Sans', sans-serif;transform:scaleX(0.8391);transform-origin:0 50%">15</span></div><div class="ed" style="left:1076px;top:235px;width:19px;height:20px;background:#fff;line-height:18px;padding-left:2px"><span style="display:inline-block;flex-shrink:0;font-size:12px;color:#000;font-family:'Liberation Sans', sans-serif;transform:scaleX(0.8391);transform-origin:0 50%">52</span></div><div class="ed" style="left:1096px;top:235px;width:47px;height:20px;background:#fff;line-height:18px;padding-left:2px"><span style="display:inline-block;flex-shrink:0;font-size:12px;color:#000;font-family:'Liberation Sans', sans-serif;transform:scaleX(0.9037);transform-origin:0 50%">41.5898</span></div><div class="ed" style="left:1160px;top:235px;width:19px;height:20px;background:#fff;line-height:18px;padding-left:2px"><span style="display:inline-block;flex-shrink:0;font-size:12px;color:#000;font-family:'Liberation Sans', sans-serif;transform:scaleX(0.8391);transform-origin:0 50%">15</span></div><div class="ed" style="left:1180px;top:235px;width:19px;height:20px;background:#fff;line-height:18px;padding-left:2px"><span style="display:inline-block;flex-shrink:0;font-size:12px;color:#000;font-family:'Liberation Sans', sans-serif;transform:scaleX(0.8391);transform-origin:0 50%">52</span></div><div class="ed" style="left:1200px;top:235px;width:47px;height:20px;background:#fff;line-height:18px;padding-left:2px"><span style="display:inline-block;flex-shrink:0;font-size:12px;color:#000;font-family:'Liberation Sans', sans-serif;transform:scaleX(0.9037);transform-origin:0 50%">41.7163</span></div><div class="bt" style="left:1256px;top:232px;width:17px;height:21px;line-height:16px;padding-top:0px;"></div><div class="bt" style="left:1256px;top:256px;width:17px;height:22px;line-height:16px;padding-top:0px;"></div><div class="t" style="left:1253px;top:277.7px;line-height:16px;"><span style="display:inline-block;flex-shrink:0;font-size:12px;color:#000;font-family:'Liberation Sans', sans-serif;transform:scaleX(0.8505);transform-origin:0 50%">Time</span></div><div class="bt" style="left:1048px;top:260px;width:201px;height:17px;line-height:16px;padding-top:0px;"><span style="display:inline-block;flex-shrink:0;font-size:12px;color:#000;font-family:'Liberation Sans', sans-serif;transform:scaleX(0.8838);transform-origin:50% 50%">Apply&nbsp;the&nbsp;edit&nbsp;time&nbsp;and&nbsp;Re-open&nbsp;graph</span></div><div class="bt" style="left:1048px;top:279px;width:201px;height:17px;line-height:16px;padding-top:0px;"><span style="display:inline-block;flex-shrink:0;font-size:12px;color:#000;font-family:'Liberation Sans', sans-serif;transform:scaleX(0.8687);transform-origin:50% 50%">Re-read&nbsp;&nbsp;Time&nbsp;Stamp&nbsp;from&nbsp;current&nbsp;frame</span></div><div class="t" style="left:1288.5px;top:201.3px;line-height:16px;"><span style="display:inline-block;flex-shrink:0;font-size:12px;color:#000;font-family:'Liberation Sans', sans-serif;transform:scaleX(0.8771);transform-origin:0 50%">Integrated</span></div><div class="t" style="left:1288.5px;top:213.3px;line-height:16px;"><span style="display:inline-block;flex-shrink:0;font-size:12px;color:#000;font-family:'Liberation Sans', sans-serif;transform:scaleX(0.8317);transform-origin:0 50%">frames</span></div><div class="ed" style="left:1344px;top:210px;width:32px;height:19px;background:#fff;line-height:17px;padding-left:2px"><span style="display:inline-block;flex-shrink:0;font-size:12px;color:#000;font-family:'Liberation Sans', sans-serif;transform:scaleX(0.8990);transform-origin:0 50%">0</span></div><div class="bt" style="left:1376px;top:209px;width:17px;height:12.5px;line-height:16px;padding-top:0px;"></div><div class="bt" style="left:1376px;top:221.5px;width:17px;height:12.5px;line-height:16px;padding-top:0px;"></div><div class="t" style="left:1400.5px;top:208.0px;line-height:16px;"><span style="display:inline-block;flex-shrink:0;font-size:12px;color:#000;font-family:'Liberation Sans', sans-serif;transform:scaleX(0.8632);transform-origin:0 50%">Digits</span></div><div class="ed" style="left:1432px;top:210px;width:24px;height:19px;background:#fff;line-height:17px;padding-left:2px"><span style="display:inline-block;flex-shrink:0;font-size:12px;color:#000;font-family:'Liberation Sans', sans-serif;transform:scaleX(0.8990);transform-origin:0 50%">3</span></div><div class="bt" style="left:1456px;top:209px;width:17px;height:12.5px;line-height:16px;padding-top:0px;"></div><div class="bt" style="left:1456px;top:221.5px;width:17px;height:12.5px;line-height:16px;padding-top:0px;"></div><div class="ck" style="left:1288px;top:240px;width:12px;height:12px"></div><div class="t" style="left:1306.4px;top:237.9px;line-height:16px;"><span style="display:inline-block;flex-shrink:0;font-size:12px;color:#000;font-family:'Liberation Sans', sans-serif;transform:scaleX(0.8634);transform-origin:0 50%">Consider&nbsp;step&nbsp;hight&nbsp;for&nbsp;time&nbsp;estimation</span></div><div class="gb" style="left:1287px;top:263px;width:194px;height:34px"></div><div class="t gl" style="left:1294.9px;top:255px;line-height:16px;width:146.1px;overflow:hidden"><span style="display:inline-block;flex-shrink:0;font-size:12.5px;font-weight:bold;color:#000;font-family:'Liberation Sans', sans-serif;transform:scaleX(0.9430);transform-origin:0 50%">Calculation&nbsp;for&nbsp;event&nbsp;time</span></div><div class="t" style="left:1307.5px;top:273.0px;line-height:16px;width:17.5px;overflow:hidden"><span style="display:inline-block;flex-shrink:0;font-size:12px;color:#000;font-family:'Liberation Sans', sans-serif;transform:scaleX(0.8335);transform-origin:0 50%">OFF</span></div><div class="t" style="left:1344.3px;top:273.0px;line-height:16px;width:39px;overflow:hidden"><span style="display:inline-block;flex-shrink:0;font-size:12px;color:#000;font-family:'Liberation Sans', sans-serif;transform:scaleX(0.9924);transform-origin:0 50%">WAT100</span></div><div class="t" style="left:1404.3px;top:273.0px;line-height:16px;width:23px;overflow:hidden"><span style="display:inline-block;flex-shrink:0;font-size:12px;color:#000;font-family:'Liberation Sans', sans-serif;transform:scaleX(0.9412);transform-origin:0 50%">120N</span></div><div class="t" style="left:1446.3px;top:273.0px;line-height:16px;width:29px;overflow:hidden"><span style="display:inline-block;flex-shrink:0;font-size:12px;color:#000;font-family:'Liberation Sans', sans-serif;transform:scaleX(0.8449);transform-origin:0 50%">910HX</span></div><svg class="a" style="left:1290px;top:275px" width="12" height="12" viewBox="0 0 12 12"><circle cx="6" cy="6" r="5.5" fill="#fff"/><path d="M1.5 9.2 A5 5 0 0 1 9.2 1.5" stroke="#a0a0a0" stroke-width="1" fill="none"/><path d="M2.3 8.6 A4 4 0 0 1 8.6 2.3" stroke="#696969" stroke-width="1" fill="none"/></svg><svg class="a" style="left:1327px;top:275px" width="12" height="12" viewBox="0 0 12 12"><circle cx="6" cy="6" r="5.5" fill="#fff"/><path d="M1.5 9.2 A5 5 0 0 1 9.2 1.5" stroke="#a0a0a0" stroke-width="1" fill="none"/><path d="M2.3 8.6 A4 4 0 0 1 8.6 2.3" stroke="#696969" stroke-width="1" fill="none"/><circle cx="6" cy="6" r="2" fill="#000"/></svg><svg class="a" style="left:1387.5px;top:275px" width="12" height="12" viewBox="0 0 12 12"><circle cx="6" cy="6" r="5.5" fill="#fff"/><path d="M1.5 9.2 A5 5 0 0 1 9.2 1.5" stroke="#a0a0a0" stroke-width="1" fill="none"/><path d="M2.3 8.6 A4 4 0 0 1 8.6 2.3" stroke="#696969" stroke-width="1" fill="none"/></svg><svg class="a" style="left:1428.8px;top:275px" width="12" height="12" viewBox="0 0 12 12"><circle cx="6" cy="6" r="5.5" fill="#fff"/><path d="M1.5 9.2 A5 5 0 0 1 9.2 1.5" stroke="#a0a0a0" stroke-width="1" fill="none"/><path d="M2.3 8.6 A4 4 0 0 1 8.6 2.3" stroke="#696969" stroke-width="1" fill="none"/></svg><div class="ed" style="left:1041px;top:306px;width:464px;height:57px;background:#fff"></div><div class="bt" style="left:1440px;top:346px;width:65px;height:24px;line-height:16px;padding-top:0px;"><span style="display:inline-block;flex-shrink:0;font-size:12px;color:#000;font-family:'Liberation Sans', sans-serif;transform:scaleX(0.8302);transform-origin:50% 50%">-&gt;&nbsp;Clip&nbsp;brd.</span></div><div class="ed" style="left:1042px;top:376px;width:463px;height:258px;background:#fff"></div><div class="a" style="left:1487px;top:378px;width:17px;height:239px;background:#f0f0f0"></div><div class="a" style="left:1043px;top:617px;width:461px;height:16px;background:#f0f0f0"></div><div class="a" style="left:1048px;top:623px;width:329px;height:3px;background:#808080;border-radius:1px"></div><div class="t" style="left:1049.3px;top:379.7px;line-height:15px;"><span style="display:inline-block;flex-shrink:0;font-size:14.8px;color:#000;font-family:'Liberation Mono', monospace;transform:scaleX(0.9009);transform-origin:0 50%">2024-12-31&nbsp;/&nbsp;(22070)2000&nbsp;AN106&nbsp;/&nbsp;UCAC4&nbsp;536-050424&nbsp;V=13</span></div><div class="t" style="left:1049.3px;top:409.7px;line-height:15px;"><span style="display:inline-block;flex-shrink:0;font-size:14.8px;color:#000;font-family:'Liberation Mono', monospace;transform:scaleX(0.9009);transform-origin:0 50%">Event&nbsp;Time&nbsp;:&nbsp;15h52m41.539s&nbsp;&nbsp;+/-&nbsp;0.037s&nbsp;&nbsp;S/N=9.39</span></div><div class="t" style="left:1049.3px;top:424.7px;line-height:15px;"><span style="display:inline-block;flex-shrink:0;font-size:14.8px;color:#000;font-family:'Liberation Mono', monospace;transform:scaleX(0.9009);transform-origin:0 50%">Mag&nbsp;Drop&nbsp;(predicted):&nbsp;&nbsp;5.8&nbsp;&nbsp;&nbsp;Mag.</span></div><div class="t" style="left:1049.3px;top:439.7px;line-height:15px;"><span style="display:inline-block;flex-shrink:0;font-size:14.8px;color:#000;font-family:'Liberation Mono', monospace;transform:scaleX(0.9009);transform-origin:0 50%">Mag&nbsp;Drop&nbsp;(measured&nbsp;):&nbsp;10.50&nbsp;&nbsp;Mag.</span></div><div class="t" style="left:1049.3px;top:469.7px;line-height:15px;"><span style="display:inline-block;flex-shrink:0;font-size:14.8px;color:#000;font-family:'Liberation Mono', monospace;transform:scaleX(0.9009);transform-origin:0 50%">-Statistical&nbsp;analysis&nbsp;of&nbsp;Light&nbsp;Intensity-</span></div><div class="t" style="left:1049.3px;top:484.7px;line-height:15px;"><span style="display:inline-block;flex-shrink:0;font-size:14.8px;color:#000;font-family:'Liberation Mono', monospace;transform:scaleX(0.9009);transform-origin:0 50%">Light&nbsp;intensity&nbsp;&nbsp;&nbsp;&nbsp;Average&nbsp;&nbsp;&nbsp;Stdv&nbsp;&nbsp;&nbsp;&nbsp;&nbsp;&nbsp;n</span></div><div class="t" style="left:1049.3px;top:499.7px;line-height:15px;"><span style="display:inline-block;flex-shrink:0;font-size:14.8px;color:#000;font-family:'Liberation Mono', monospace;transform:scaleX(0.9009);transform-origin:0 50%">&nbsp;&nbsp;Combined&nbsp;&nbsp;:&nbsp;&nbsp;&nbsp;&nbsp;&nbsp;&nbsp;1567.2&nbsp;&nbsp;&nbsp;&nbsp;167.5&nbsp;&nbsp;&nbsp;&nbsp;&nbsp;26</span></div><div class="t" style="left:1049.3px;top:514.7px;line-height:15px;"><span style="display:inline-block;flex-shrink:0;font-size:14.8px;color:#000;font-family:'Liberation Mono', monospace;transform:scaleX(0.9009);transform-origin:0 50%">&nbsp;&nbsp;Background:&nbsp;&nbsp;&nbsp;&nbsp;&nbsp;&nbsp;&nbsp;&nbsp;-4.7&nbsp;&nbsp;&nbsp;&nbsp;&nbsp;48.8&nbsp;&nbsp;&nbsp;&nbsp;&nbsp;&nbsp;5</span></div><div class="t" style="left:1049.3px;top:529.7px;line-height:15px;"><span style="display:inline-block;flex-shrink:0;font-size:14.8px;color:#000;font-family:'Liberation Mono', monospace;transform:scaleX(0.9009);transform-origin:0 50%">Noise&nbsp;Level&nbsp;(N/S)&nbsp;&nbsp;Upper&nbsp;&nbsp;&nbsp;&nbsp;Lower&nbsp;&nbsp;&nbsp;(S/N)</span></div><div class="t" style="left:1049.3px;top:544.7px;line-height:15px;"><span style="display:inline-block;flex-shrink:0;font-size:14.8px;color:#000;font-family:'Liberation Mono', monospace;transform:scaleX(0.9009);transform-origin:0 50%">&nbsp;&nbsp;First&nbsp;event:&nbsp;&nbsp;&nbsp;&nbsp;&nbsp;0.0000&nbsp;&nbsp;&nbsp;0.0621</span></div><div class="t" style="left:1049.3px;top:559.7px;line-height:15px;"><span style="display:inline-block;flex-shrink:0;font-size:14.8px;color:#000;font-family:'Liberation Mono', monospace;transform:scaleX(0.9009);transform-origin:0 50%">&nbsp;&nbsp;Total&nbsp;event:&nbsp;&nbsp;&nbsp;&nbsp;&nbsp;0.1065&nbsp;&nbsp;&nbsp;0.0310&nbsp;&nbsp;&nbsp;9.39</span></div><div class="t" style="left:1049.3px;top:574.7px;line-height:15px;"><span style="display:inline-block;flex-shrink:0;font-size:14.8px;color:#000;font-family:'Liberation Mono', monospace;transform:scaleX(0.9009);transform-origin:0 50%">1.35485</span></div><div class="a" style="left:1490px;top:626px;width:17px;height:145px;background:repeating-conic-gradient(#e6e6e6 0 25%,#f7f7f7 0 50%) 0 0/2px 2px"></div><div class="bt" style="left:1490px;top:626px;width:17px;height:17px;line-height:16px;padding-top:0px;"></div><div class="bt" style="left:1490px;top:696px;width:17px;height:17px;line-height:16px;padding-top:0px;"></div><div class="bt" style="left:1490px;top:754px;width:17px;height:17px;line-height:16px;padding-top:0px;"></div><div class="gb" style="left:1043px;top:648px;width:175px;height:65px"></div><div class="t gl" style="left:1049.9px;top:640px;line-height:16px;width:84.3px;overflow:hidden"><span style="display:inline-block;flex-shrink:0;font-size:12px;color:#000;font-family:'Liberation Sans', sans-serif;transform:scaleX(0.8941);transform-origin:0 50%">Text&nbsp;out&nbsp;to&nbsp;Graph</span></div><svg class="a" style="left:1050.7px;top:657.9px" width="12" height="12" viewBox="0 0 12 12"><circle cx="6" cy="6" r="5.5" fill="#fff"/><path d="M1.5 9.2 A5 5 0 0 1 9.2 1.5" stroke="#a0a0a0" stroke-width="1" fill="none"/><path d="M2.3 8.6 A4 4 0 0 1 8.6 2.3" stroke="#696969" stroke-width="1" fill="none"/></svg><div class="t" style="left:1068.7px;top:655.9px;line-height:16px;"><span style="display:inline-block;flex-shrink:0;font-size:12px;color:#000;font-family:'Liberation Sans', sans-serif;transform:scaleX(0.8085);transform-origin:0 50%">OFF</span></div><svg class="a" style="left:1050.7px;top:676.1px" width="12" height="12" viewBox="0 0 12 12"><circle cx="6" cy="6" r="5.5" fill="#fff"/><path d="M1.5 9.2 A5 5 0 0 1 9.2 1.5" stroke="#a0a0a0" stroke-width="1" fill="none"/><path d="M2.3 8.6 A4 4 0 0 1 8.6 2.3" stroke="#696969" stroke-width="1" fill="none"/><circle cx="6" cy="6" r="2" fill="#000"/></svg><div class="t" style="left:1068.7px;top:674.1px;line-height:16px;"><span style="display:inline-block;flex-shrink:0;font-size:12px;color:#000;font-family:'Liberation Sans', sans-serif;transform:scaleX(0.8848);transform-origin:0 50%">Text&nbsp;with&nbsp;transparency&nbsp;BKG</span></div><svg class="a" style="left:1050.7px;top:694.3px" width="12" height="12" viewBox="0 0 12 12"><circle cx="6" cy="6" r="5.5" fill="#fff"/><path d="M1.5 9.2 A5 5 0 0 1 9.2 1.5" stroke="#a0a0a0" stroke-width="1" fill="none"/><path d="M2.3 8.6 A4 4 0 0 1 8.6 2.3" stroke="#696969" stroke-width="1" fill="none"/></svg><div class="t" style="left:1068.7px;top:692.3px;line-height:16px;"><span style="display:inline-block;flex-shrink:0;font-size:12px;color:#000;font-family:'Liberation Sans', sans-serif;transform:scaleX(0.9077);transform-origin:0 50%">Text&nbsp;with&nbsp;opaque&nbsp;background</span></div><div class="gb" style="left:1225px;top:648px;width:86px;height:65px"></div><div class="t gl" style="left:1231.4px;top:640px;line-height:16px;width:28.8px;overflow:hidden"><span style="display:inline-block;flex-shrink:0;font-size:12px;color:#000;font-family:'Liberation Sans', sans-serif;transform:scaleX(0.8928);transform-origin:0 50%">Mode</span></div><svg class="a" style="left:1232.5px;top:657.9px" width="12" height="12" viewBox="0 0 12 12"><circle cx="6" cy="6" r="5.5" fill="#fff"/><path d="M1.5 9.2 A5 5 0 0 1 9.2 1.5" stroke="#a0a0a0" stroke-width="1" fill="none"/><path d="M2.3 8.6 A4 4 0 0 1 8.6 2.3" stroke="#696969" stroke-width="1" fill="none"/></svg><div class="t" style="left:1250.6px;top:655.9px;line-height:16px;"><span style="display:inline-block;flex-shrink:0;font-size:12px;color:#000;font-family:'Liberation Sans', sans-serif;transform:scaleX(0.8467);transform-origin:0 50%">Time</span></div><svg class="a" style="left:1232.5px;top:676.1px" width="12" height="12" viewBox="0 0 12 12"><circle cx="6" cy="6" r="5.5" fill="#fff"/><path d="M1.5 9.2 A5 5 0 0 1 9.2 1.5" stroke="#a0a0a0" stroke-width="1" fill="none"/><path d="M2.3 8.6 A4 4 0 0 1 8.6 2.3" stroke="#696969" stroke-width="1" fill="none"/></svg><div class="t" style="left:1250.6px;top:674.1px;line-height:16px;"><span style="display:inline-block;flex-shrink:0;font-size:12px;color:#000;font-family:'Liberation Sans', sans-serif;transform:scaleX(0.8922);transform-origin:0 50%">Info.&nbsp;Right</span></div><svg class="a" style="left:1232.5px;top:694.3px" width="12" height="12" viewBox="0 0 12 12"><circle cx="6" cy="6" r="5.5" fill="#fff"/><path d="M1.5 9.2 A5 5 0 0 1 9.2 1.5" stroke="#a0a0a0" stroke-width="1" fill="none"/><path d="M2.3 8.6 A4 4 0 0 1 8.6 2.3" stroke="#696969" stroke-width="1" fill="none"/><circle cx="6" cy="6" r="2" fill="#000"/></svg><div class="t" style="left:1250.6px;top:692.3px;line-height:16px;"><span style="display:inline-block;flex-shrink:0;font-size:12px;color:#000;font-family:'Liberation Sans', sans-serif;transform:scaleX(0.8865);transform-origin:0 50%">Info.&nbsp;Left</span></div><div class="a" style="left:1319px;top:644px;width:162px;height:18px;background:repeating-conic-gradient(#e6e6e6 0 25%,#f7f7f7 0 50%) 0 0/2px 2px"></div><div class="bt" style="left:1319px;top:644px;width:18px;height:18px;line-height:16px;padding-top:0px;"></div><div class="bt" style="left:1348px;top:644px;width:17px;height:18px;line-height:16px;padding-top:0px;"></div><div class="bt" style="left:1464px;top:644px;width:17px;height:18px;line-height:16px;padding-top:0px;"></div><div class="gb" style="left:1320px;top:672px;width:55px;height:41px"></div><div class="t gl" style="left:1327.8px;top:664px;line-height:16px;width:43.5px;overflow:hidden"><span style="display:inline-block;flex-shrink:0;font-size:12px;color:#000;font-family:'Liberation Sans', sans-serif;transform:scaleX(0.8524);transform-origin:0 50%">Font&nbsp;size</span></div><div class="bt" style="left:1328px;top:683px;width:17px;height:11.5px;line-height:16px;padding-top:0px;"></div><div class="bt" style="left:1328px;top:694.5px;width:17px;height:11.5px;line-height:16px;padding-top:0px;"></div><div class="ed" style="left:1345px;top:682px;width:23px;height:20px;background:#fff;line-height:18px;padding-left:2px"><span style="display:inline-block;flex-shrink:0;font-size:12px;color:#000;font-family:'Liberation Sans', sans-serif;transform:scaleX(0.8541);transform-origin:0 50%">10</span></div><div class="ed" style="left:1387px;top:666px;width:97px;height:20px;background:#fff;line-height:18px;padding-left:3px"><span style="display:inline-block;flex-shrink:0;font-size:12px;color:#000;font-family:'Liberation Sans', sans-serif;transform:scaleX(0.8934);transform-origin:0 50%">Edit16</span></div><div class="ed" style="left:1387px;top:690px;width:97px;height:20px;background:#fff;line-height:18px;padding-left:3px"><span style="display:inline-block;flex-shrink:0;font-size:12px;color:#000;font-family:'Liberation Sans', sans-serif;transform:scaleX(0.8934);transform-origin:0 50%">Edit25</span></div><div class="ed" style="left:1048px;top:722px;width:433px;height:72px;background:#fff"></div><div class="a" style="left:1050px;top:741px;width:429px;height:17px;background:#0078d7"></div><div class="t" style="left:1052.4px;top:724.2px;line-height:17px;"><span style="display:inline-block;flex-shrink:0;font-size:14.5px;color:#000;font-family:'Liberation Sans', sans-serif;transform:scaleX(0.9964);transform-origin:0 50%">1&nbsp;&nbsp;15&nbsp;52&nbsp;40.105&nbsp;+/-&nbsp;0.027s,&nbsp;&nbsp;S/N=&nbsp;9.24&nbsp;D&nbsp;&nbsp;&nbsp;Main&nbsp;change</span></div><div class="t" style="left:1052.4px;top:741.0px;line-height:17px;"><span style="display:inline-block;flex-shrink:0;font-size:14.5px;color:#fff;font-family:'Liberation Sans', sans-serif;transform:scaleX(0.9964);transform-origin:0 50%">2&nbsp;&nbsp;15&nbsp;52&nbsp;41.539&nbsp;+/-&nbsp;0.037s,&nbsp;&nbsp;S/N=&nbsp;9.39&nbsp;R&nbsp;&nbsp;&nbsp;Main&nbsp;change</span></div><div class="bt" style="left:1072px;top:803px;width:193px;height:24px;line-height:16px;padding-top:0px;"><span style="display:inline-block;flex-shrink:0;font-size:12px;color:#000;font-family:'Liberation Sans', sans-serif;transform:scaleX(0.8717);transform-origin:50% 50%">Miss&nbsp;Disappearance&nbsp;&nbsp;(approx.&nbsp;time)</span></div><div class="bt" style="left:1272px;top:803px;width:185px;height:24px;line-height:16px;padding-top:0px;"><span style="display:inline-block;flex-shrink:0;font-size:12px;color:#000;font-family:'Liberation Sans', sans-serif;transform:scaleX(0.8884);transform-origin:50% 50%">Miss&nbsp;&nbsp;Reapppearance&nbsp;[approx.&nbsp;tine]</span></div><div class="ed" style="left:1048px;top:843px;width:111px;height:19px;background:#fff;line-height:17px;padding-left:3px"><span style="display:inline-block;flex-shrink:0;font-size:12px;color:#000;font-family:'Liberation Sans', sans-serif;transform:scaleX(0.8824);transform-origin:0 50%">Main&nbsp;light&nbsp;change</span></div><div class="bt" style="left:1142px;top:845px;width:16px;height:15px;line-height:16px;padding-top:0px;"></div><div class="bt" style="left:1168px;top:834px;width:57px;height:33px;line-height:16px;padding-top:0px;"><span style="display:inline-block;flex-shrink:0;font-size:15.5px;color:#000;font-family:'Liberation Sans', sans-serif;transform:scaleX(0.9151);transform-origin:50% 50%">Delete</span></div><div class="bt" style="left:1230px;top:834px;width:49px;height:33px;line-height:16px;padding-top:0px;"><span style="display:inline-block;flex-shrink:0;font-size:15px;color:#000;font-family:'Liberation Sans', sans-serif;transform:scaleX(0.8797);transform-origin:50% 50%">Sort</span></div><div class="bt" style="left:1290px;top:834px;width:113px;height:33px;line-height:16px;padding-top:0px;border-color:#000;outline:1px dotted #000;outline-offset:-5px"><span style="display:inline-block;flex-shrink:0;font-size:16px;font-weight:bold;color:#0a0a20;font-family:'Liberation Sans', sans-serif;transform:scaleX(0.9159);transform-origin:50% 50%">Add&nbsp;to&nbsp;report</span></div><div class="bt" style="left:1416px;top:834px;width:89px;height:33px;line-height:16px;padding-top:0px;"><span style="display:inline-block;flex-shrink:0;font-size:13px;font-weight:bold;color:#000;font-family:'Liberation Sans', sans-serif;transform:scaleX(0.8738);transform-origin:50% 50%">Apply&nbsp;&amp;&nbsp;Close</span></div><svg class="a" style="left:0;top:0;pointer-events:none" width="1512" height="879" viewBox="0 0 1512 879"><path d="M220.25 674.5 L220.25 681.5 L216.75 678.0Z" fill="#000"/><path d="M359.75 674.5 L359.75 681.5 L363.25 678.0Z" fill="#000"/><path d="M444.5 674.25 L450.5 674.25 L447.5 671.25Z" fill="#000"/><path d="M444.5 682.75 L450.5 682.75 L447.5 685.75Z" fill="#000"/><path d="M444.5 706.25 L450.5 706.25 L447.5 703.25Z" fill="#000"/><path d="M444.5 714.75 L450.5 714.75 L447.5 717.75Z" fill="#000"/><path d="M471.0 697.0 L479.0 697.0 L475.0 693.0Z" fill="#000"/><path d="M471.0 733.5 L479.0 733.5 L475.0 737.5Z" fill="#000"/><path d="M493.5 697.0 L501.5 697.0 L497.5 693.0Z" fill="#000"/><path d="M493.5 733.5 L501.5 733.5 L497.5 737.5Z" fill="#000"/><path d="M958.0 54.5 L966.0 54.5 L962.0 58.5Z" fill="#000"/><path d="M918.0 77.5 L926.0 77.5 L922.0 81.5Z" fill="#000"/><path d="M935.75 194.5 L935.75 201.5 L932.25 198.0Z" fill="#000"/><path d="M946.25 194.5 L946.25 201.5 L949.75 198.0Z" fill="#000"/><path d="M935.75 237.5 L935.75 244.5 L932.25 241.0Z" fill="#000"/><path d="M946.25 237.5 L946.25 244.5 L949.75 241.0Z" fill="#000"/><path d="M970.5 194.5 L970.5 201.5 L967.0 198.0Z" fill="#000"/><path d="M980.5 194.5 L980.5 201.5 L984.0 198.0Z" fill="#000"/><path d="M970.5 237.5 L970.5 244.5 L967.0 241.0Z" fill="#000"/><path d="M980.5 237.5 L980.5 244.5 L984.0 241.0Z" fill="#000"/><path d="M1006.5 194.5 L1006.5 201.5 L1003.0 198.0Z" fill="#000"/><path d="M1016.5 194.5 L1016.5 201.5 L1020.0 198.0Z" fill="#000"/><path d="M1006.5 237.5 L1006.5 244.5 L1003.0 241.0Z" fill="#000"/><path d="M1016.5 237.5 L1016.5 244.5 L1020.0 241.0Z" fill="#000"/><path d="M862.0 296.5 L862.0 303.5 L858.5 300.0Z" fill="#000"/><path d="M875.0 296.5 L875.0 303.5 L878.5 300.0Z" fill="#000"/><path d="M910.0 296.5 L910.0 303.5 L906.5 300.0Z" fill="#000"/><path d="M923.0 296.5 L923.0 303.5 L926.5 300.0Z" fill="#000"/><path d="M857.5 534.5 L863.5 534.5 L860.5 531.5Z" fill="#b0b0b0"/><path d="M857.5 543.5 L863.5 543.5 L860.5 546.5Z" fill="#b0b0b0"/><path d="M875.0 534.5 L881.0 534.5 L878.0 531.5Z" fill="#b0b0b0"/><path d="M875.0 543.5 L881.0 543.5 L878.0 546.5Z" fill="#b0b0b0"/><path d="M929.0 534.5 L935.0 534.5 L932.0 531.5Z" fill="#b0b0b0"/><path d="M929.0 543.5 L935.0 543.5 L932.0 546.5Z" fill="#b0b0b0"/><path d="M945.0 534.5 L951.0 534.5 L948.0 531.5Z" fill="#b0b0b0"/><path d="M945.0 543.5 L951.0 543.5 L948.0 546.5Z" fill="#b0b0b0"/><path d="M961.0 534.5 L967.0 534.5 L964.0 531.5Z" fill="#b0b0b0"/><path d="M961.0 543.5 L967.0 543.5 L964.0 546.5Z" fill="#b0b0b0"/><path d="M858.0 592.0 L864.0 592.0 L861.0 589.0Z" fill="#b0b0b0"/><path d="M858.0 600.0 L864.0 600.0 L861.0 603.0Z" fill="#b0b0b0"/><path d="M1399.0 154.25 L1405.0 154.25 L1402.0 151.25Z" fill="#000"/><path d="M1399.0 162.75 L1405.0 162.75 L1402.0 165.75Z" fill="#000"/><path d="M1415.0 154.25 L1421.0 154.25 L1418.0 151.25Z" fill="#000"/><path d="M1415.0 162.75 L1421.0 162.75 L1418.0 165.75Z" fill="#000"/><path d="M1431.0 154.25 L1437.0 154.25 L1434.0 151.25Z" fill="#000"/><path d="M1431.0 162.75 L1437.0 162.75 L1434.0 165.75Z" fill="#000"/><path d="M1258.5 245.5 L1270.5 245.5 L1264.5 239.5Z" fill="#000"/><path d="M1258.5 264.0 L1270.5 264.0 L1264.5 270.0Z" fill="#000"/><path d="M1381.5 216.75 L1387.5 216.75 L1384.5 213.75Z" fill="#000"/><path d="M1381.5 226.25 L1387.5 226.25 L1384.5 229.25Z" fill="#000"/><path d="M1461.5 216.75 L1467.5 216.75 L1464.5 213.75Z" fill="#000"/><path d="M1461.5 226.25 L1467.5 226.25 L1464.5 229.25Z" fill="#000"/><path d="M1490.5 389.5 L1500.5 389.5 L1495.5 384.5Z" fill="#a0a0a0"/><path d="M1490.5 604.5 L1500.5 604.5 L1495.5 609.5Z" fill="#a0a0a0"/><path d="M1495.0 636.25 L1502.0 636.25 L1498.5 632.75Z" fill="#000"/><path d="M1495.0 760.75 L1502.0 760.75 L1498.5 764.25Z" fill="#000"/><path d="M1329.75 649.5 L1329.75 656.5 L1326.25 653.0Z" fill="#000"/><path d="M1470.75 649.5 L1470.75 656.5 L1474.25 653.0Z" fill="#000"/><path d="M1333.5 690.25 L1339.5 690.25 L1336.5 687.25Z" fill="#000"/><path d="M1333.5 698.75 L1339.5 698.75 L1336.5 701.75Z" fill="#000"/><path d="M1146.0 850.5 L1154.0 850.5 L1150.0 854.5Z" fill="#000"/></svg></body></html>
